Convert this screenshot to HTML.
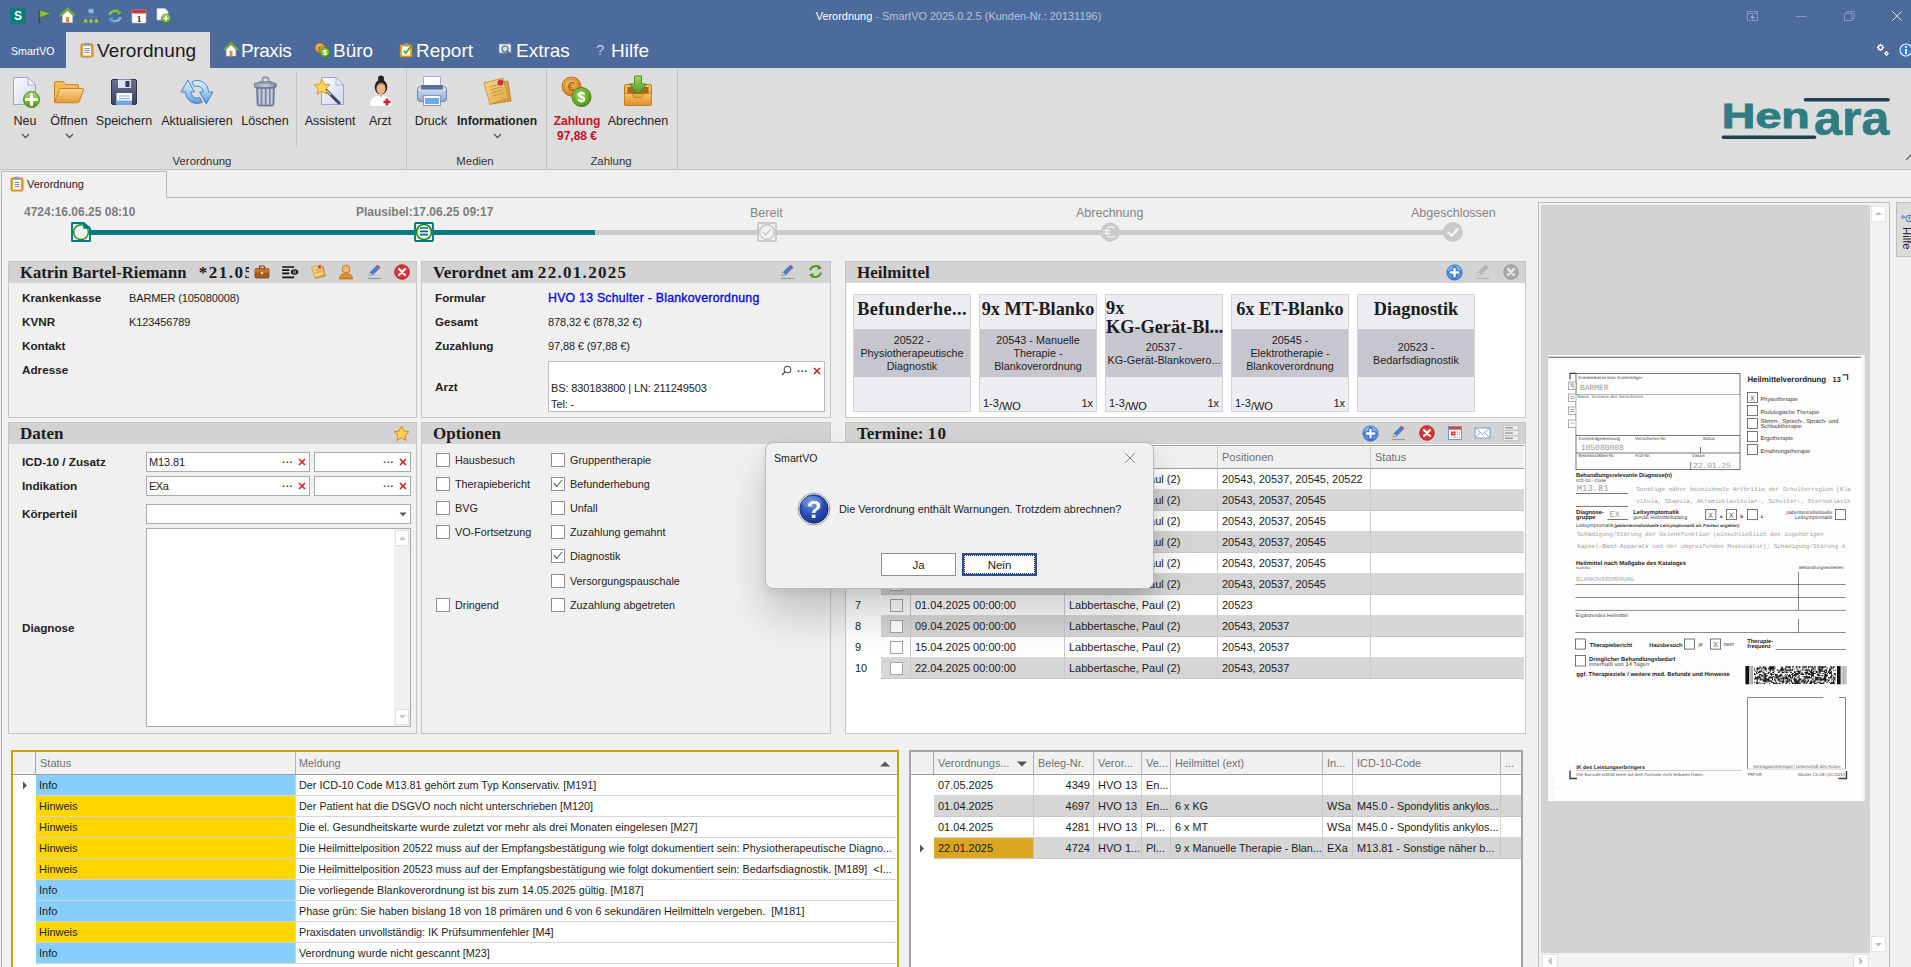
<!DOCTYPE html>
<html><head><meta charset="utf-8"><title>SmartVO</title>
<style>
*{box-sizing:border-box;margin:0;padding:0}
html,body{width:1911px;height:967px;overflow:hidden;background:#f0f0f0;font-family:"Liberation Sans",sans-serif;font-size:11.5px;color:#1a1a1a}
.a{position:absolute}
.t{position:absolute;white-space:nowrap;line-height:14px}
.pl{top:206px!important}
.b{font-weight:bold}
.serif{font-family:"Liberation Serif",serif;font-weight:bold}
#title{left:0;top:0;width:1911px;height:68px;background:#4d6a9c}
#ribbon{left:0;top:68px;width:1911px;height:102px;background:#dddddd;border-bottom:1px solid #bdbdbd}
.mtab{position:absolute;top:32.6px;height:36px;color:#fff;font-size:19px;line-height:36px;white-space:nowrap}
.rl{position:absolute;top:114px;font-size:12.5px;line-height:15px;text-align:center;white-space:nowrap;color:#222;transform:translateX(-50%)}
.gl{position:absolute;top:154px;font-size:11.4px;line-height:14px;color:#333;transform:translateX(-50%);white-space:nowrap}
.vsep{position:absolute;width:1px;background:#c4c4c4}
.chev{position:absolute;width:9px;height:6px}
.panel{position:absolute;border:1px solid #c6c6c6;background:#f0f0f0}
.ph{position:absolute;left:0;top:0;right:0;height:21px;background:#d3d3d3}
.panel.m{top:422px!important;height:312px!important}
.panel.m > :not(.ph):not(.pt){margin-top:1px}
.panel.m > .lbl,.panel.m > .val{margin-top:0!important}
.pt{position:absolute;left:11px;top:1px;font-family:"Liberation Serif",serif;font-weight:bold;font-size:17px;line-height:20px;color:#1c1c1c;white-space:nowrap}
.lbl{position:absolute;font-weight:bold;font-size:11.7px;line-height:14px;white-space:nowrap;color:#222}
.val{position:absolute;letter-spacing:-.12px;font-size:11px;line-height:14px;white-space:nowrap;color:#222}
.inp{position:absolute;background:#fff;border:1px solid #ababab;height:20px}
.cb{position:absolute;width:14px;height:14px;background:#fff;border:1px solid #8f8f8f}
.cbl{position:absolute;font-size:10.8px;line-height:14px;white-space:nowrap;color:#222}
</style></head><body>

<!-- ================= TITLE BAR ================= -->
<div class="a" id="title"></div>
<div class="t" style="left:0;width:1917px;top:9px;text-align:center;font-size:10.95px;color:#b4c3dd"><span style="color:#fff">Verordnung</span> - SmartVO 2025.0.2.5 (Kunden-Nr.: 20131196)</div>

<!-- menu tabs -->
<div class="a" style="left:66px;top:32px;width:144px;height:37px;background:#dddddd"></div>
<div class="t" style="left:11px;top:44px;color:#fff;font-size:10.6px">SmartVO</div>
<div class="mtab" style="left:97px;color:#1a1a1a;letter-spacing:.1px">Verordnung</div>
<div class="mtab" style="left:241px;letter-spacing:-.4px">Praxis</div>
<div class="mtab" style="left:333px">Büro</div>
<div class="mtab" style="left:416px">Report</div>
<div class="mtab" style="left:516px">Extras</div>
<div class="mtab" style="left:611px">Hilfe</div>

<!-- ================= RIBBON ================= -->
<div class="a" id="ribbon"></div>
<div class="rl" style="left:25px">Neu</div>
<div class="rl" style="left:69px">Öffnen</div>
<div class="rl" style="left:124px">Speichern</div>
<div class="rl" style="left:197px">Aktualisieren</div>
<div class="rl" style="left:265px">Löschen</div>
<div class="rl" style="left:330px">Assistent</div>
<div class="rl" style="left:380px">Arzt</div>
<div class="rl" style="left:431px">Druck</div>
<div class="rl b" style="left:497px;font-size:12px">Informationen</div>
<div class="rl b" style="left:577px;font-size:12px;color:#c8101e">Zahlung<br>97,88 €</div>
<div class="rl" style="left:638px">Abrechnen</div>
<div class="gl" style="left:202px">Verordnung</div>
<div class="gl" style="left:475px">Medien</div>
<div class="gl" style="left:611px">Zahlung</div>
<div class="vsep" style="left:296px;top:72px;height:76px"></div>
<div class="vsep" style="left:406px;top:69px;height:100px"></div>
<div class="vsep" style="left:546px;top:69px;height:100px"></div>
<div class="vsep" style="left:677px;top:69px;height:100px"></div>

<!-- document tab strip -->
<div class="a" style="left:166px;top:197px;width:1745px;height:1px;background:#b4b4b4"></div>
<div class="a" style="left:1px;top:171px;width:166px;height:27px;border:1px solid #b4b4b4;border-bottom:none;background:#f0f0f0"></div>
<div class="a" style="left:1px;top:197px;width:1px;height:770px;background:#a9a9a9"></div>
<div class="t" style="left:27px;top:177px;font-size:11px;color:#222">Verordnung</div>

<!-- ===== SVG defs ===== -->
<svg width="0" height="0" style="position:absolute">
<defs>
<linearGradient id="gPage" x1="0" y1="0" x2="1" y2="1"><stop offset="0" stop-color="#fdfdff"/><stop offset="1" stop-color="#cdd5ee"/></linearGradient>
<linearGradient id="gGreen" x1="0" y1="0" x2="0" y2="1"><stop offset="0" stop-color="#a6d85e"/><stop offset="1" stop-color="#4f9a1c"/></linearGradient>
<linearGradient id="gFold" x1="0" y1="0" x2="0" y2="1"><stop offset="0" stop-color="#fbd78f"/><stop offset="1" stop-color="#e59a35"/></linearGradient>
<linearGradient id="gFlop" x1="0" y1="0" x2="0" y2="1"><stop offset="0" stop-color="#6a7392"/><stop offset="1" stop-color="#3b4362"/></linearGradient>
<linearGradient id="gBlue" gradientUnits="userSpaceOnUse" x1="0" y1="3" x2="0" y2="27"><stop offset="0" stop-color="#dff3fb"/><stop offset=".5" stop-color="#a3d0f0"/><stop offset="1" stop-color="#4f98d8"/></linearGradient>
<linearGradient id="gTrash" x1="0" y1="0" x2="1" y2="0"><stop offset="0" stop-color="#8e96ab"/><stop offset=".5" stop-color="#c3c8d6"/><stop offset="1" stop-color="#7d859b"/></linearGradient>
<linearGradient id="gPrn" x1="0" y1="0" x2="0" y2="1"><stop offset="0" stop-color="#dfe7f5"/><stop offset="1" stop-color="#8ba3d0"/></linearGradient>
<linearGradient id="gNote" x1="0" y1="0" x2="1" y2="1"><stop offset="0" stop-color="#f8d68c"/><stop offset="1" stop-color="#e0a545"/></linearGradient>
<radialGradient id="gCoinO" cx=".4" cy=".35" r=".7"><stop offset="0" stop-color="#f7c574"/><stop offset="1" stop-color="#c97a1c"/></radialGradient>
<radialGradient id="gCoinG" cx=".4" cy=".35" r=".7"><stop offset="0" stop-color="#a5dc5a"/><stop offset="1" stop-color="#4a9418"/></radialGradient>
<radialGradient id="gQ" cx=".4" cy=".3" r=".8"><stop offset="0" stop-color="#5f86e6"/><stop offset=".6" stop-color="#2449b0"/><stop offset="1" stop-color="#16307e"/></radialGradient>
<linearGradient id="gPlus" x1="0" y1="0" x2="0" y2="1"><stop offset="0" stop-color="#8cc3f5"/><stop offset="1" stop-color="#3d82dc"/></linearGradient>
<linearGradient id="gBox" x1="0" y1="0" x2="0" y2="1"><stop offset="0" stop-color="#f6c266"/><stop offset="1" stop-color="#e08f2a"/></linearGradient>
</defs></svg>

<!-- quick access toolbar -->
<div class="a" style="left:10px;top:8px;width:16px;height:16px;background:#0d7f7b;color:#fff;font-weight:bold;font-size:12px;line-height:16px;text-align:center">S</div>
<svg class="a" style="left:36px;top:8px" width="16" height="16" viewBox="0 0 16 16"><rect x="2.5" y="2" width="1.6" height="13" fill="#444"/><path d="M4 2.5 L14 5.5 L4 9.5Z" fill="#8dc63f" stroke="#5a8f1f" stroke-width=".7"/></svg>
<svg class="a" style="left:59px;top:7px" width="17" height="17" viewBox="0 0 17 17"><path d="M1 9 L8.5 1.5 L16 9" fill="none" stroke="#6fae2d" stroke-width="2.2"/><path d="M3.5 8.5 L8.5 3.8 L13.5 8.5 V15.5 H3.5Z" fill="#fbfbfb" stroke="#c9c9c9" stroke-width=".6"/><rect x="7" y="10" width="3" height="5.5" fill="#e08d2c"/></svg>
<svg class="a" style="left:83px;top:8px" width="16" height="16" viewBox="0 0 16 16"><rect x="5.5" y="1" width="5" height="4" fill="#8ec0ee" stroke="#5b8fc8" stroke-width=".6"/><path d="M8 5 V9 M2.5 12 V9 H13.5 V12 M8 9 V12" stroke="#6d7d96" stroke-width="1" fill="none"/><rect x="1" y="11.5" width="3.2" height="3.2" fill="#9acb3c"/><rect x="6.4" y="11.5" width="3.2" height="3.2" fill="#9acb3c"/><rect x="11.8" y="11.5" width="3.2" height="3.2" fill="#9acb3c"/></svg>
<svg class="a" style="left:107px;top:8px" width="16" height="16" viewBox="0 0 16 16"><path d="M2.5 7 A5.5 5 0 0 1 12 4.5" fill="none" stroke="#8dc63f" stroke-width="2.4"/><path d="M10 1 L15 4.5 L10.5 7.5Z" fill="#7ab32e"/><path d="M13.5 9 A5.5 5 0 0 1 4 11.5" fill="none" stroke="#7db4e6" stroke-width="2.4"/><path d="M6 15 L1 11.5 L5.5 8.5Z" fill="#5b9bd8"/></svg>
<svg class="a" style="left:131px;top:8px" width="16" height="16" viewBox="0 0 16 16"><rect x="1" y="2" width="14" height="13" rx="1" fill="#fafafa" stroke="#c7c7c7" stroke-width=".6"/><rect x="1" y="2" width="14" height="3.6" rx="1" fill="#d9342b"/><text x="8" y="13.5" font-family="Liberation Serif" font-weight="bold" font-size="9" text-anchor="middle" fill="#222">1</text></svg>
<svg class="a" style="left:155px;top:7px" width="17" height="17" viewBox="0 0 17 17"><path d="M2 1.5 H10 L13 4.5 V13 H2Z" fill="#fbfbfd" stroke="#c2c7d6" stroke-width=".7"/><circle cx="11" cy="11.5" r="4.6" fill="url(#gGreen)" stroke="#3f8212" stroke-width=".6"/><path d="M11 8.8 V14.2 M8.3 11.5 H13.7" stroke="#fff" stroke-width="1.6"/></svg>

<!-- menu tab icons -->
<svg class="a" style="left:80px;top:42px" width="14" height="16" viewBox="0 0 14 16"><rect x="1" y="2" width="12" height="13" rx="1.2" fill="#e9a628" stroke="#b97a10" stroke-width=".8"/><rect x="3" y="4" width="8" height="9.5" fill="#fdfdfd"/><rect x="4.5" y=".8" width="5" height="2.8" rx=".8" fill="#7f9fd0"/><path d="M4.5 6.5 H9.5 M4.5 8.5 H9.5 M4.5 10.5 H9.5" stroke="#6b83b5" stroke-width=".9"/></svg>
<svg class="a" style="left:223px;top:41px" width="16" height="17" viewBox="0 0 17 17"><path d="M1 9 L8.5 1.5 L16 9" fill="none" stroke="#6fae2d" stroke-width="2.2"/><path d="M3.5 8.5 L8.5 3.8 L13.5 8.5 V15.5 H3.5Z" fill="#fbfbfb" stroke="#c9c9c9" stroke-width=".6"/><rect x="7" y="10" width="3" height="5.5" fill="#e08d2c"/></svg>
<svg class="a" style="left:314px;top:42px" width="17" height="16" viewBox="0 0 17 16"><circle cx="6" cy="6" r="5" fill="url(#gCoinO)" stroke="#a8650f" stroke-width=".6"/><text x="6" y="8.6" font-size="7" font-weight="bold" text-anchor="middle" fill="#a8650f" font-family="Liberation Sans">€</text><circle cx="11" cy="10.5" r="5" fill="url(#gCoinG)" stroke="#3b7a10" stroke-width=".6"/><text x="11" y="13.3" font-size="7.5" font-weight="bold" text-anchor="middle" fill="#fff" font-family="Liberation Sans">$</text></svg>
<svg class="a" style="left:399px;top:42px" width="15" height="16" viewBox="0 0 15 16"><rect x="1" y="2.5" width="12" height="12.5" rx="1" fill="#eaa92c" stroke="#b97a10" stroke-width=".8"/><rect x="3" y="4.5" width="8" height="9" fill="#fdfdf4"/><rect x="4.5" y="1" width="5" height="2.8" rx=".8" fill="#8a8f9c"/><path d="M4.5 8.5 L6.8 11 L12.5 3.5" fill="none" stroke="#5da51e" stroke-width="1.8"/></svg>
<svg class="a" style="left:498px;top:42px" width="16" height="16" viewBox="0 0 16 16"><rect x="1" y="2" width="12" height="9" fill="#e9eef8" stroke="#7f8fb2" stroke-width=".8"/><path d="M2 2 V.8 M5 2 V.8 M8 2 V.8 M11 2 V.8" stroke="#6b7a9c" stroke-width="1"/><circle cx="7" cy="7" r="3" fill="#cfe2f7" stroke="#55627e" stroke-width="1.1"/><path d="M9.3 9.3 L14 14.5" stroke="#55627e" stroke-width="2"/></svg>
<div class="t" style="left:596px;top:41px;font-size:15px;line-height:18px;color:#b5cbf2">?</div>

<!-- right title icons -->
<svg class="a" style="left:1747px;top:11px" width="11" height="10" viewBox="0 0 11 10"><rect x=".5" y=".5" width="10" height="9" fill="none" stroke="#8197bf" stroke-width="1"/><path d="M.5 2.500 H10.500" fill="none" stroke="#8197bf" stroke-width="1"/><path d="M5.500 9 V5 M3.500 6.500 L5.500 4.300 L7.500 6.500Z" fill="#8ea2c6" stroke="#8ea2c6" stroke-width=".9"/></svg>
<div class="a" style="left:1796px;top:16px;width:10px;height:1px;background:#8499bd"></div>
<svg class="a" style="left:1844px;top:11px" width="11" height="10" viewBox="0 0 11 10"><rect x=".5" y="2.500" width="7.500" height="7" fill="none" stroke="#8197bf"/><path d="M2.500 2.500 V.5 H10.300 V7.500 H8" fill="none" stroke="#8197bf"/></svg>
<svg class="a" style="left:1892px;top:11px" width="10" height="10" viewBox="0 0 10 10"><path d="M.3 .3 L9.700 9.700 M9.700 .3 L.3 9.700" stroke="#d3dbea" stroke-width="1"/></svg>
<svg class="a" style="left:1876px;top:43px" width="14" height="14" viewBox="0 0 14 14"><circle cx="4.5" cy="4.5" r="2.2" fill="none" stroke="#fff" stroke-width="1.5"/><path d="M4.5 .8 V2 M4.5 7 V8.2 M.8 4.5 H2 M7 4.5 H8.2 M1.9 1.9 L2.7 2.7 M6.3 6.3 L7.1 7.1 M7.1 1.9 L6.3 2.7 M1.9 7.1 L2.7 6.3" stroke="#fff" stroke-width="1"/><circle cx="10.5" cy="10.5" r="1.3" fill="none" stroke="#fff" stroke-width="1.2"/><path d="M10.5 8 V9 M10.5 12 V13 M8 10.5 H9 M12 10.5 H13" stroke="#fff" stroke-width=".9"/></svg>
<svg class="a" style="left:1899px;top:43px" width="12" height="14" viewBox="0 0 12 14"><circle cx="7" cy="7" r="6" fill="#3a78d8" stroke="#e9eef8" stroke-width="1.2"/><rect x="6" y="6" width="2" height="5" fill="#fff"/><circle cx="7" cy="4" r="1.1" fill="#fff"/></svg>

<!-- ribbon big icons -->
<svg class="a" style="left:9px;top:74px" width="34" height="36" viewBox="0 0 34 36"><path d="M4.5 3.5 H19 L26.5 11 V30.5 H4.5Z" fill="url(#gPage)" stroke="#9aa5cf" stroke-width="1"/><path d="M19 3.5 V11 H26.5Z" fill="#eef1fb" stroke="#9aa5cf" stroke-width=".8"/><circle cx="22.5" cy="25.5" r="8" fill="url(#gGreen)" stroke="#4a8f1a" stroke-width="1"/><path d="M22.500 20.500 V30.500 M17.500 25.500 H27.500" stroke="#fff" stroke-width="3.200" stroke-linecap="round"/></svg>
<svg class="a" style="left:52px;top:78px" width="34" height="28" viewBox="0 0 34 28"><path d="M2.500 24.500 V5 Q2.500 3.500 4 3.500 H11 L13.500 6.500 H25 Q26.500 6.500 26.500 8 V11" fill="#f3b95a" stroke="#c9822a" stroke-width="1"/><path d="M2.500 24.500 L7.500 11.500 Q8 10.500 9 10.500 H30.500 Q32 10.500 31.500 12 L27 24 Q26.700 24.800 25.500 24.800 H3Z" fill="url(#gFold)" stroke="#c9822a" stroke-width="1"/></svg>
<svg class="a" style="left:110px;top:78px" width="28" height="28" viewBox="0 0 28 28"><rect x="1.500" y="1.500" width="25" height="25" rx="1.500" fill="url(#gFlop)" stroke="#2e3450" stroke-width="1"/><rect x="8" y="1.500" width="13" height="8.500" fill="#dfe3ee"/><rect x="15.500" y="3" width="4" height="6" fill="#353b57"/><rect x="6.500" y="15" width="15.500" height="11.500" fill="#fbfcff"/><rect x="6.500" y="22.500" width="15.500" height="4" fill="#6fa7e2"/><path d="M9 18 H19.500 M9 20.500 H19.500" stroke="#8fa7d0" stroke-width="1"/></svg>
<svg class="a" style="left:180px;top:77px" width="34" height="30" viewBox="0 0 34 30"><path d="M22.22 25.25 A11.5 11.5 0 0 1 5.50 15.00 L1.00 15.00 L7.80 3.20 L14.40 15.00 L11.00 15.00 A6.0 6.0 0 0 0 19.72 20.35 Z" fill="url(#gBlue)" stroke="#4079be" stroke-width=".9" stroke-linejoin="round"/><path d="M11.78 4.75 A11.5 11.5 0 0 1 28.50 15.00 L33.00 15.00 L26.20 26.80 L19.60 15.00 L23.00 15.00 A6.0 6.0 0 0 0 14.28 9.65 Z" fill="url(#gBlue)" stroke="#4079be" stroke-width=".9" stroke-linejoin="round"/></svg>
<svg class="a" style="left:252px;top:75px" width="26" height="32" viewBox="0 0 26 32"><path d="M9.500 8 L10.800 2.800 Q11 2 12 2 H15.200 Q16.200 2 16.400 2.800 L17.700 8" fill="#aeb4c6" stroke="#737b95" stroke-width="1"/><rect x="11.500" y="3.800" width="4.200" height="2.200" rx=".6" fill="#dcdcdc"/><path d="M5 8.500 L7.500 6.500 H19.500 L22 8.500Z" fill="#9aa1b8" stroke="#737b95" stroke-width=".6"/><rect x="2.300" y="8" width="22" height="4.700" rx="1.200" fill="url(#gTrash)" stroke="#6b7390" stroke-width=".8"/><path d="M4.500 12.700 H22.500 L21.800 29.500 Q21.700 31 20.200 31 H6.800 Q5.300 31 5.200 29.500Z" fill="#7d85a2" stroke="#666e8b" stroke-width=".8"/><path d="M6.400 14 H8.600 V29.500 H6.800Z M10.400 14 H12.800 V29.500 H10.400Z M14.600 14 H17 V29.500 H14.600Z M18.600 14 H20.800 L20.400 29.500 H18.600Z" fill="#c3cfdc"/></svg>
<svg class="a" style="left:312px;top:74px" width="34" height="34" viewBox="0 0 34 34"><path d="M9.500 3.500 H24 L31.500 11 V30.500 H9.500Z" fill="url(#gPage)" stroke="#9aa5cf" stroke-width="1"/><path d="M24 3.500 V11 H31.500Z" fill="#eef1fb" stroke="#9aa5cf" stroke-width=".8"/><path d="M14 16 L27 29" stroke="#3d4258" stroke-width="3" stroke-linecap="round"/><path d="M14.500 16.500 L19 21" stroke="#c9ccd8" stroke-width="1.200"/><path d="M10 5 L12.300 10.200 L18 10.800 L13.800 14.600 L15 20.200 L10 17.300 L5 20.200 L6.200 14.600 L2 10.800 L7.700 10.200Z" fill="#fbd25c" stroke="#e59a1e" stroke-width="1"/></svg>
<svg class="a" style="left:366px;top:74px" width="30" height="34" viewBox="0 0 30 34"><path d="M3 32.500 Q3 21 15 21 Q27 21 27 32.500Z" fill="#fdfdfd" stroke="#d5d5d5" stroke-width=".8"/><circle cx="15" cy="4.500" r="3" fill="#26221f"/><ellipse cx="15" cy="13" rx="6.300" ry="7.500" fill="#26221f"/><ellipse cx="15" cy="14.500" rx="4.500" ry="5.800" fill="#e9b98a"/><path d="M10.500 12 Q15 8 19.500 12 Q17 9.500 15 9.500 Q12 9.500 10.500 12Z" fill="#26221f"/><path d="M12.500 20 L15 24 L17.500 20Z" fill="#e9b98a"/><path d="M21 24.500 V31.500 M17.500 28 H24.500" stroke="#d81e1e" stroke-width="2.600"/></svg>
<svg class="a" style="left:415px;top:74px" width="34" height="34" viewBox="0 0 34 34"><path d="M8.500 2.500 H25.500 V14 H8.500Z" fill="#fbfcff" stroke="#a4b0cd" stroke-width="1"/><rect x="2.500" y="12.500" width="29" height="15" rx="3" fill="url(#gPrn)" stroke="#6d84b8" stroke-width="1"/><rect x="6" y="11" width="22" height="4.500" rx="1" fill="#5b6e99"/><rect x="8.500" y="21.500" width="17" height="10" fill="#fbfcff" stroke="#8697c0" stroke-width="1"/><rect x="10" y="24" width="14" height="6" fill="#72aae6"/></svg>
<svg class="a" style="left:481px;top:75px" width="32" height="33" viewBox="0 0 32 33"><path d="M7 9 L27 6 L30 26 L10 29Z" fill="#dca044" stroke="#b87a24" stroke-width=".8"/><path d="M3 8 L22 3 L28 23 L9 29.500Z" fill="url(#gNote)" stroke="#c28a30" stroke-width=".8"/><path d="M8.500 12 L20 8.800 M9.500 15 L21 11.800 M10.500 18 L22 14.800 M11.500 21 L23 17.800" stroke="#c59236" stroke-width="1"/><circle cx="19.500" cy="7.500" r="2.600" fill="#d62f3a" stroke="#9a1a24" stroke-width=".6"/></svg>
<svg class="a" style="left:560px;top:75px" width="34" height="34" viewBox="0 0 34 34"><circle cx="11.500" cy="11.500" r="9.500" fill="url(#gCoinO)" stroke="#b46d14" stroke-width="1"/><circle cx="11.500" cy="11.500" r="7" fill="none" stroke="#c8831f" stroke-width=".8"/><text x="11.200" y="16" font-size="13" font-weight="bold" text-anchor="middle" fill="#b06a12" font-family="Liberation Sans">€</text><circle cx="21.500" cy="22" r="9.500" fill="url(#gCoinG)" stroke="#3f8212" stroke-width="1"/><circle cx="21.500" cy="22" r="7" fill="none" stroke="#5da01f" stroke-width=".8"/><text x="21.500" y="27" font-size="14" font-weight="bold" text-anchor="middle" fill="#fff" font-family="Liberation Sans">$</text></svg>
<svg class="a" style="left:622px;top:74px" width="32" height="34" viewBox="0 0 32 34"><path d="M2.500 12 Q2.500 10.500 4 10.500 H28 Q29.500 10.500 29.500 12 V30 Q29.500 31.500 28 31.500 H4 Q2.500 31.500 2.500 30Z" fill="url(#gBox)" stroke="#c17a1c" stroke-width="1"/><rect x="5.500" y="13" width="21" height="7" fill="#a5681c"/><path d="M2.500 19.500 H10 L12 23.500 H20 L22 19.500 H29.500 V30 Q29.500 31.500 28 31.500 H4 Q2.500 31.500 2.500 30Z" fill="url(#gBox)" stroke="#c17a1c" stroke-width=".8"/><path d="M12.500 2 H19.500 V10 H24.500 L16 20 L7.500 10 H12.500Z" fill="url(#gGreen)" stroke="#4a8f1a" stroke-width="1"/></svg>

<!-- dropdown chevrons -->
<svg class="chev" style="left:21px;top:133px" viewBox="0 0 9 6"><path d="M1 1 L4.500 4.500 L8 1" fill="none" stroke="#555" stroke-width="1.300"/></svg>
<svg class="chev" style="left:65px;top:133px" viewBox="0 0 9 6"><path d="M1 1 L4.500 4.500 L8 1" fill="none" stroke="#555" stroke-width="1.300"/></svg>
<svg class="chev" style="left:493px;top:133px" viewBox="0 0 9 6"><path d="M1 1 L4.500 4.500 L8 1" fill="none" stroke="#555" stroke-width="1.300"/></svg>

<!-- doc tab icon -->
<svg class="a" style="left:10px;top:176px" width="14" height="16" viewBox="0 0 14 16"><rect x="1" y="2" width="12" height="13" rx="1.200" fill="#e9a628" stroke="#b97a10" stroke-width=".8"/><rect x="3" y="4" width="8" height="9.500" fill="#fdfdfd"/><rect x="4.500" y=".8" width="5" height="2.800" rx=".8" fill="#7f9fd0"/><path d="M4.500 6.500 H9.500 M4.500 8.500 H9.500 M4.500 10.500 H9.500" stroke="#6b83b5" stroke-width=".9"/></svg>

<!-- Henara logo -->
<svg class="a" style="left:1718px;top:94px" width="176" height="48" viewBox="0 0 176 48">
<text x="3.800" y="34.300" font-family="Liberation Sans" font-weight="bold" font-size="35.500" fill="#2f7c82" stroke="#2f7c82" stroke-width=".9" textLength="88" lengthAdjust="spacingAndGlyphs">Hen</text>
<text x="96" y="41" font-family="Liberation Sans" font-weight="bold" font-size="48" fill="#2f7c82" stroke="#2f7c82" stroke-width=".6" textLength="75.500" lengthAdjust="spacingAndGlyphs">ara</text>
<path d="M87.500 5.700 H170" stroke="#1f3f52" stroke-width="3.600" stroke-linecap="round"/>
<path d="M5.500 43.200 H96.500" stroke="#1f3f52" stroke-width="3.600" stroke-linecap="round"/>
</svg>
<svg class="a" style="left:1906px;top:153px" width="6" height="8" viewBox="0 0 6 8"><path d="M0 7 L6 1" fill="none" stroke="#555" stroke-width="1.200"/></svg>

<!-- ================= PROGRESS ================= -->
<div class="a" style="left:81px;top:230px;width:1372px;height:5px;background:#c9c9c9"></div>
<div class="a" style="left:81px;top:230px;width:514px;height:5px;background:#007b83"></div>
<div class="t b" style="left:24px;top:205px;font-size:12px;color:#7d7d7d">4724:16.06.25 08:10</div>
<div class="t b" style="left:356px;top:205px;font-size:12px;color:#7d7d7d">Plausibel:17.06.25 09:17</div>
<div class="t" style="left:750px;top:206px;font-size:12.5px;color:#858585">Bereit</div>
<div class="t" style="left:1076px;top:206px;font-size:12.5px;color:#858585">Abrechnung</div>
<div class="t" style="left:1411px;top:206px;font-size:12.5px;color:#858585">Abgeschlossen</div>
<svg class="a" style="left:71px;top:222px" width="20" height="20" viewBox="0 0 20 20"><path d="M1 1 H12.700 L19 6.300 V19 H1Z" fill="#f1f1f1" stroke="#007b83" stroke-width="1.900" stroke-linejoin="round"/><path d="M12.300 1 V6.800 H19Z" fill="#007b83"/><circle cx="10" cy="10.200" r="7.400" fill="#f1f1f1" stroke="#1a9118" stroke-width="1.500"/><path d="M12.300 1.500 V6.800 H18.500" fill="#007b83" stroke="none"/></svg>
<svg class="a" style="left:414px;top:222px" width="20" height="20" viewBox="0 0 20 20"><rect x="1" y="1" width="18" height="18" rx="1" fill="#f3f3f3" stroke="#007b83" stroke-width="1.900"/><circle cx="10" cy="10" r="7.500" fill="#f6f4f6" stroke="#1a9118" stroke-width="1.700"/><path d="M6 6 H14 M6 9.300 H14 M6 12.600 H14" stroke="#007580" stroke-width="1.700"/></svg>
<svg class="a" style="left:757px;top:222px" width="20" height="20" viewBox="0 0 20 20"><rect x="1" y="1" width="18" height="18" rx=".8" fill="#f0f0f0" stroke="#c9c9c9" stroke-width="1.900"/><circle cx="10" cy="10" r="7.400" fill="#f0f0f0" stroke="#c9c9c9" stroke-width="1.600"/><path d="M5.800 10 L8.800 12.600 L14 7.400" fill="none" stroke="#c9c9c9" stroke-width="1.500"/></svg>
<svg class="a" style="left:1100px;top:222px" width="20" height="20" viewBox="0 0 20 20"><circle cx="10.200" cy="10" r="9.600" fill="#c9c9c9"/><path d="M15 6.300 A5.300 5.300 0 1 0 15 13.800" fill="none" stroke="#f0f0f0" stroke-width="1.300"/><path d="M3 8.600 H10.800 M3 11.300 H10.800" stroke="#f0f0f0" stroke-width="1.300"/></svg>
<svg class="a" style="left:1443px;top:222px" width="20" height="20" viewBox="0 0 20 20"><circle cx="10" cy="10" r="10" fill="#c9c9c9"/><path d="M5 10.300 L8.600 13.700 L15.300 6.500" fill="none" stroke="#f4f4f4" stroke-width="2.400"/></svg>

<!-- ================= PATIENT PANEL ================= -->
<div class="panel" style="left:8px;top:261px;width:409px;height:157px">
 <div class="ph"></div>
 <div class="pt" style="width:229px;overflow:hidden;font-size:16.6px">Katrin Bartel-Riemann &nbsp;&nbsp;<span style="letter-spacing:1.5px;font-size:17px">*21.05.1975</span></div>
 <div class="lbl" style="left:13px;top:29px">Krankenkasse</div><div class="val" style="left:120px;top:29px">BARMER (105080008)</div>
 <div class="lbl" style="left:13px;top:53px">KVNR</div><div class="val" style="left:120px;top:53px">K123456789</div>
 <div class="lbl" style="left:13px;top:77px">Kontakt</div>
 <div class="lbl" style="left:13px;top:101px">Adresse</div>
</div>
<!-- patient header icons -->
<svg class="a" style="left:254px;top:264px" width="16" height="16" viewBox="0 0 16 16"><rect x="5.500" y="2" width="5" height="3" rx="1" fill="none" stroke="#6e3a12" stroke-width="1.200"/><rect x="1" y="4.500" width="14" height="9.500" rx="1.200" fill="#a9581d" stroke="#6e3a12" stroke-width=".8"/><rect x="1" y="4.500" width="14" height="4" fill="#c4702b"/><rect x="6.800" y="8" width="2.400" height="2" fill="#f1d9a0"/></svg>
<svg class="a" style="left:282px;top:264px" width="17" height="16" viewBox="0 0 17 16"><path d="M.2 3 H12.200 M.2 6.200 H7.300 M.2 9.400 H7.300 M.2 13.300 H12.200" stroke="#111" stroke-width="1.700"/><ellipse cx="12.600" cy="8" rx="3.700" ry="2.700" fill="#111"/><circle cx="12.600" cy="8" r="1.300" fill="none" stroke="#e8e8e8" stroke-width=".7"/></svg>
<svg class="a" style="left:310px;top:263px" width="17" height="17" viewBox="0 0 17 17"><path d="M3 5 L13 3 L15.500 13 L5.500 15.500Z" fill="#dca044" stroke="#b87a24" stroke-width=".6"/><path d="M1.500 4.500 L11 1.500 L14.500 11.500 L5 15Z" fill="#f5cd7c" stroke="#c28a30" stroke-width=".6"/><path d="M5 7.500 L11 5.600 M5.800 9.800 L11.800 7.900" stroke="#c59236" stroke-width=".8"/><circle cx="9.500" cy="4" r="1.500" fill="#d62f3a"/></svg>
<svg class="a" style="left:338px;top:263px" width="16" height="17" viewBox="0 0 16 17"><path d="M1.500 16 Q1.500 10.500 8 10.500 Q14.500 10.500 14.500 16Z" fill="#e8912c" stroke="#b66a14" stroke-width=".7"/><circle cx="8" cy="6" r="4" fill="#f3b565" stroke="#b66a14" stroke-width=".7"/><rect x="1.500" y="14.500" width="13" height="1.500" fill="#c97a1c"/></svg>
<svg class="a" style="left:366px;top:263px" width="17" height="17" viewBox="0 0 17 17"><path d="M2 15.500 H15" stroke="#9a9a9a" stroke-width="1.200"/><path d="M3 12.500 L4 9.500 L11.500 2 L14 4.500 L6.500 12Z" fill="#4a7fd6" stroke="#2c57a8" stroke-width=".6"/><path d="M11.500 2 L14 4.500 L12.800 5.700 L10.300 3.200Z" fill="#e04848"/><path d="M3 12.500 L4 9.500 L6.500 12Z" fill="#f3d9a8"/></svg>
<svg class="a" style="left:394px;top:264px" width="16" height="16" viewBox="0 0 16 16"><circle cx="8" cy="8" r="7.300" fill="#e23030" stroke="#a61616" stroke-width=".8"/><path d="M5 5 L11 11 M11 5 L5 11" stroke="#fff" stroke-width="2.300" stroke-linecap="round"/></svg>

<!-- ================= VERORDNET PANEL ================= -->
<div class="panel" style="left:421px;top:261px;width:410px;height:157px">
 <div class="ph"></div>
 <div class="pt">Verordnet am <span style="letter-spacing:1.3px">22.01.2025</span></div>
 <div class="lbl" style="left:13px;top:29px">Formular</div><div class="val" style="left:126px;top:29px;color:#0808e8;font-size:12.3px;letter-spacing:.25px;-webkit-text-stroke:.35px #0808e8">HVO 13 Schulter - Blankoverordnung</div>
 <div class="lbl" style="left:13px;top:53px">Gesamt</div><div class="val" style="left:126px;top:53px">878,32 € (878,32 €)</div>
 <div class="lbl" style="left:13px;top:77px">Zuzahlung</div><div class="val" style="left:126px;top:77px">97,88 € (97,88 €)</div>
 <div class="lbl" style="left:13px;top:118px">Arzt</div>
 <div class="a" style="left:126px;top:99px;width:277px;height:51px;background:#fff;border:1px solid #bcbcbc"></div>
 <div class="val" style="left:129px;top:119px">BS: 830183800 | LN: 211249503</div>
 <div class="val" style="left:129px;top:135px">Tel: -</div>
</div>
<svg class="a" style="left:781px;top:365px" width="11" height="11" viewBox="0 0 11 11"><circle cx="6.500" cy="4.500" r="3.300" fill="none" stroke="#555" stroke-width="1.100"/><path d="M4 7 L1 10" stroke="#555" stroke-width="1.400"/></svg>
<div class="t b" style="left:797px;top:364px;font-size:11px;color:#444;letter-spacing:0">···</div>
<svg class="a" style="left:813px;top:367px" width="8" height="8" viewBox="0 0 8 8"><path d="M1 1 L7 7 M7 1 L1 7" stroke="#d11f1f" stroke-width="1.600"/></svg>
<svg class="a" style="left:779px;top:263px" width="17" height="17" viewBox="0 0 17 17"><path d="M2 15.500 H15" stroke="#9a9a9a" stroke-width="1.200"/><path d="M3 12.500 L4 9.500 L11.500 2 L14 4.500 L6.500 12Z" fill="#4a7fd6" stroke="#2c57a8" stroke-width=".6"/><path d="M11.500 2 L14 4.500 L12.800 5.700 L10.300 3.200Z" fill="#e04848"/><path d="M3 12.500 L4 9.500 L6.500 12Z" fill="#f3d9a8"/></svg>
<svg class="a" style="left:807px;top:263px" width="17" height="17" viewBox="0 0 16 16"><path d="M3 7 A5.200 5 0 0 1 12 4.500" fill="none" stroke="#4f9a1c" stroke-width="2"/><path d="M10.500 1.500 L14 5 L9.800 6.500Z" fill="#4f9a1c"/><path d="M13 9 A5.200 5 0 0 1 4 11.500" fill="none" stroke="#4f9a1c" stroke-width="2"/><path d="M5.500 14.500 L2 11 L6.200 9.500Z" fill="#4f9a1c"/></svg>

<!-- ================= HEILMITTEL PANEL ================= -->
<div class="panel" style="left:845px;top:261px;width:681px;height:157px;background:#fff">
 <div class="ph"></div>
 <div class="pt" style="left:11px">Heilmittel</div>
</div>
<style>
.hc{position:absolute;top:294px;width:118px;height:118px;background:#ececf1;border:1px solid #d4d4da}
.hc .mid{position:absolute;left:0;right:0;top:34px;height:48px;background:#c6c6ce}
.hc .ht{position:absolute;left:0;right:0;top:4px;text-align:center;font-family:"Liberation Serif",serif;font-weight:bold;font-size:18.3px;line-height:20px;color:#1c1c1c;white-space:nowrap}
.hc .hs{position:absolute;left:0;right:0;text-align:center;font-size:10.8px;line-height:13px;color:#222;white-space:nowrap}
.hc .f1{position:absolute;left:3px;top:101px;font-size:11px;line-height:14px;white-space:nowrap}
.hc .f2{position:absolute;right:3px;top:101px;font-size:11px;line-height:14px}
</style>
<div class="hc" style="left:853px"><div class="mid"></div><div class="ht" style="letter-spacing:.35px">Befunderhe...</div><div class="hs" style="top:39px">20522 -<br>Physiotherapeutische<br>Diagnostik</div></div>
<div class="hc" style="left:979px"><div class="mid"></div><div class="ht">9x MT-Blanko</div><div class="hs" style="top:39px">20543 - Manuelle<br>Therapie -<br>Blankoverordnung</div><div class="f1">1-3<span style="position:relative;top:3px">/WO</span></div><div class="f2">1x</div></div>
<div class="hc" style="left:1105px"><div class="mid"></div><div class="ht" style="text-align:left;left:0;line-height:19px">9x<br>KG-Gerät-Bl...</div><div class="hs" style="top:46px">20537 -<br>KG-Gerät-Blankovero...</div><div class="f1">1-3<span style="position:relative;top:3px">/WO</span></div><div class="f2">1x</div></div>
<div class="hc" style="left:1231px"><div class="mid"></div><div class="ht">6x ET-Blanko</div><div class="hs" style="top:39px">20545 -<br>Elektrotherapie -<br>Blankoverordnung</div><div class="f1">1-3<span style="position:relative;top:3px">/WO</span></div><div class="f2">1x</div></div>
<div class="hc" style="left:1357px"><div class="mid"></div><div class="ht">Diagnostik</div><div class="hs" style="top:46px">20523 -<br>Bedarfsdiagnostik</div></div>
<svg class="a" style="left:1446px;top:264px" width="17" height="17" viewBox="0 0 17 17"><circle cx="8.500" cy="8.500" r="7.600" fill="url(#gPlus)" stroke="#2f63bd" stroke-width=".9"/><path d="M8.500 4.200 V12.800 M4.200 8.500 H12.800" stroke="#2a5fc0" stroke-width="4.200" stroke-linecap="round"/><path d="M8.500 4.600 V12.400 M4.600 8.500 H12.400" stroke="#fff" stroke-width="2.400" stroke-linecap="round"/></svg>
<svg class="a" style="left:1474px;top:263px" width="17" height="17" viewBox="0 0 17 17"><path d="M2 15.500 H15" stroke="#b4b4b4" stroke-width="1.200"/><path d="M3 12.500 L4 9.500 L11.500 2 L14 4.500 L6.500 12Z" fill="#b9b9b9" stroke="#9c9c9c" stroke-width=".6"/><path d="M3 12.500 L4 9.500 L6.500 12Z" fill="#e2e2e2"/></svg>
<svg class="a" style="left:1503px;top:264px" width="16" height="16" viewBox="0 0 16 16"><circle cx="8" cy="8" r="7.300" fill="#a9a9a9" stroke="#8e8e8e" stroke-width=".8"/><path d="M5 5 L11 11 M11 5 L5 11" stroke="#e9e9e9" stroke-width="2.300" stroke-linecap="round"/></svg>

<!-- ================= DATEN PANEL ================= -->
<div class="panel m" style="left:8px;top:423px;width:409px;height:311px">
 <div class="ph"></div>
 <div class="pt">Daten</div>
 <div class="lbl" style="left:13px;top:32px">ICD-10 / Zusatz</div>
 <div class="lbl" style="left:13px;top:56px">Indikation</div>
 <div class="lbl" style="left:13px;top:84px">Körperteil</div>
 <div class="lbl" style="left:13px;top:198px">Diagnose</div>
 <div class="inp" style="left:137px;top:28px;width:164px"></div><div class="val" style="left:140px;top:32px;font-size:11px">M13.81</div>
 <div class="inp" style="left:305px;top:28px;width:97px"></div>
 <div class="inp" style="left:137px;top:52px;width:164px"></div><div class="val" style="left:140px;top:56px;font-size:11px;letter-spacing:-.5px">EXa</div>
 <div class="inp" style="left:305px;top:52px;width:97px"></div>
 <div class="inp" style="left:137px;top:80px;width:265px"></div>
 <div class="inp" style="left:137px;top:104px;width:265px;height:199px"></div>
 <div class="a" style="left:385px;top:105px;width:16px;height:197px;background:#f0f0f0"></div>
 <div class="a" style="left:386px;top:106px;width:14px;height:16px;background:#fdfdfd;border:1px solid #e1e1e1"></div>
 <div class="a" style="left:386px;top:285px;width:14px;height:16px;background:#fdfdfd;border:1px solid #e1e1e1"></div>
</div>
<svg class="a" style="left:398px;top:535px" width="9" height="6" viewBox="0 0 9 6"><path d="M1 5 L4.500 1.200 L8 5Z" fill="#c7c7c7"/></svg>
<svg class="a" style="left:398px;top:714px" width="9" height="6" viewBox="0 0 9 6"><path d="M1 1 L4.500 4.800 L8 1Z" fill="#c7c7c7"/></svg>
<svg class="a" style="left:399px;top:512px" width="8" height="5" viewBox="0 0 8 5"><path d="M.5 .5 L4 4.300 L7.500 .5Z" fill="#555"/></svg>
<svg class="a" style="left:393px;top:425px" width="17" height="17" viewBox="0 0 17 17"><path d="M8.500 1 L10.800 6 L16 6.600 L12.100 10.200 L13.200 15.500 L8.500 12.800 L3.800 15.500 L4.900 10.200 L1 6.600 L6.200 6Z" fill="#f9cf55" stroke="#d58a1a" stroke-width="1"/></svg>
<!-- input glyphs -->
<div class="t b" style="left:282px;top:455px;font-size:11px;color:#555">···</div>
<svg class="a" style="left:298px;top:458px" width="8" height="8" viewBox="0 0 8 8"><path d="M1 1 L7 7 M7 1 L1 7" stroke="#d11f1f" stroke-width="1.600"/></svg>
<div class="t b" style="left:383px;top:455px;font-size:11px;color:#555">···</div>
<svg class="a" style="left:399px;top:458px" width="8" height="8" viewBox="0 0 8 8"><path d="M1 1 L7 7 M7 1 L1 7" stroke="#d11f1f" stroke-width="1.600"/></svg>
<div class="t b" style="left:282px;top:479px;font-size:11px;color:#555">···</div>
<svg class="a" style="left:298px;top:482px" width="8" height="8" viewBox="0 0 8 8"><path d="M1 1 L7 7 M7 1 L1 7" stroke="#d11f1f" stroke-width="1.600"/></svg>
<div class="t b" style="left:383px;top:479px;font-size:11px;color:#555">···</div>
<svg class="a" style="left:399px;top:482px" width="8" height="8" viewBox="0 0 8 8"><path d="M1 1 L7 7 M7 1 L1 7" stroke="#d11f1f" stroke-width="1.600"/></svg>

<!-- ================= OPTIONEN PANEL ================= -->
<div class="panel m" style="left:421px;top:423px;width:410px;height:311px">
 <div class="ph"></div>
 <div class="pt">Optionen</div>
 <div class="cb" style="left:14px;top:29px"></div><div class="cbl" style="left:33px;top:29px">Hausbesuch</div>
 <div class="cb" style="left:14px;top:53px"></div><div class="cbl" style="left:33px;top:53px">Therapiebericht</div>
 <div class="cb" style="left:14px;top:77px"></div><div class="cbl" style="left:33px;top:77px">BVG</div>
 <div class="cb" style="left:14px;top:101px"></div><div class="cbl" style="left:33px;top:101px">VO-Fortsetzung</div>
 <div class="cb" style="left:14px;top:174px"></div><div class="cbl" style="left:33px;top:174px">Dringend</div>
 <div class="cb" style="left:129px;top:29px"></div><div class="cbl" style="left:148px;top:29px">Gruppentherapie</div>
 <div class="cb" style="left:129px;top:53px"></div><div class="cbl" style="left:148px;top:53px">Befunderhebung</div>
 <div class="cb" style="left:129px;top:77px"></div><div class="cbl" style="left:148px;top:77px">Unfall</div>
 <div class="cb" style="left:129px;top:101px"></div><div class="cbl" style="left:148px;top:101px">Zuzahlung gemahnt</div>
 <div class="cb" style="left:129px;top:125px"></div><div class="cbl" style="left:148px;top:125px">Diagnostik</div>
 <div class="cb" style="left:129px;top:150px"></div><div class="cbl" style="left:148px;top:150px">Versorgungspauschale</div>
 <div class="cb" style="left:129px;top:174px"></div><div class="cbl" style="left:148px;top:174px">Zuzahlung abgetreten</div>
</div>
<svg class="a" style="left:553px;top:479px" width="10" height="9" viewBox="0 0 10 9"><path d="M1 4.500 L3.800 7.500 L9 1" fill="none" stroke="#5e5e5e" stroke-width="1.100"/></svg>
<svg class="a" style="left:553px;top:551px" width="10" height="9" viewBox="0 0 10 9"><path d="M1 4.500 L3.800 7.500 L9 1" fill="none" stroke="#5e5e5e" stroke-width="1.100"/></svg>

<!-- ================= TERMINE PANEL ================= -->
<div class="panel m" style="left:845px;top:423px;width:681px;height:311px;background:#fff">
 <div class="ph"></div>
 <div class="pt" style="left:11px">Termine: <span style="letter-spacing:1.3px">10</span></div>
</div>
<style>
.tg{position:absolute;left:850px;width:674px;height:21px;font-size:11px;line-height:21px;color:#1c1c1c}
.tg div{position:absolute;top:0;height:21px;white-space:nowrap;overflow:hidden}
.tg .n{left:5px}
.tg .bg{left:31px;width:643px;background:#fff;border-bottom:1px solid #d9d9d9}
.tg.alt .bg{background:#d6d6d6;border-bottom-color:#cacaca}
.tg .c0{left:31px;width:30px;border-right:1px solid #c9c9c9}
.tg .c1{left:61px;width:154px;border-right:1px solid #c9c9c9;padding-left:4px}
.tg .c2{left:215px;width:153px;border-right:1px solid #c9c9c9;padding-left:4px}
.tg .c3{left:368px;width:153px;border-right:1px solid #c9c9c9;padding-left:4px}
.tg .c4{left:521px;width:153px;padding-left:4px}
.tg .k{left:40px;top:4px;width:13px;height:13px;background:#fff;border:1px solid #a5a5a5}
</style>
<div class="tg" style="top:445px;height:24px;line-height:22px;color:#707070;background:#f0f0f0;border-top:1px solid #a4a4a4;border-bottom:1px solid #a0a0a0"><div class="c0" style="height:23px"></div><div class="c1" style="height:23px">Datum</div><div class="c2" style="height:23px">Therapeut</div><div class="c3" style="height:23px">Positionen</div><div class="c4" style="height:23px">Status</div></div>
<div class="tg" style="top:469px"><div class="bg"></div><div class="n">1</div><div class="c0"></div><div class="k"></div><div class="c1">22.01.2025 00:00:00</div><div class="c2">Labbertasche, Paul (2)</div><div class="c3">20543, 20537, 20545, 20522</div><div class="c4"></div></div>
<div class="tg alt" style="top:490px"><div class="bg"></div><div class="n">2</div><div class="c0"></div><div class="k"></div><div class="c1">29.01.2025 00:00:00</div><div class="c2">Labbertasche, Paul (2)</div><div class="c3">20543, 20537, 20545</div><div class="c4"></div></div>
<div class="tg" style="top:511px"><div class="bg"></div><div class="n">3</div><div class="c0"></div><div class="k"></div><div class="c1">05.02.2025 00:00:00</div><div class="c2">Labbertasche, Paul (2)</div><div class="c3">20543, 20537, 20545</div><div class="c4"></div></div>
<div class="tg alt" style="top:532px"><div class="bg"></div><div class="n">4</div><div class="c0"></div><div class="k"></div><div class="c1">12.02.2025 00:00:00</div><div class="c2">Labbertasche, Paul (2)</div><div class="c3">20543, 20537, 20545</div><div class="c4"></div></div>
<div class="tg" style="top:553px"><div class="bg"></div><div class="n">5</div><div class="c0"></div><div class="k"></div><div class="c1">19.02.2025 00:00:00</div><div class="c2">Labbertasche, Paul (2)</div><div class="c3">20543, 20537, 20545</div><div class="c4"></div></div>
<div class="tg alt" style="top:574px"><div class="bg"></div><div class="n">6</div><div class="c0"></div><div class="k"></div><div class="c1">26.02.2025 00:00:00</div><div class="c2">Labbertasche, Paul (2)</div><div class="c3">20543, 20537, 20545</div><div class="c4"></div></div>
<div class="tg" style="top:595px"><div class="bg"></div><div class="n">7</div><div class="c0"></div><div class="k"></div><div class="c1">01.04.2025 00:00:00</div><div class="c2">Labbertasche, Paul (2)</div><div class="c3">20523</div><div class="c4"></div></div>
<div class="tg alt" style="top:616px"><div class="bg"></div><div class="n">8</div><div class="c0"></div><div class="k"></div><div class="c1">09.04.2025 00:00:00</div><div class="c2">Labbertasche, Paul (2)</div><div class="c3">20543, 20537</div><div class="c4"></div></div>
<div class="tg" style="top:637px"><div class="bg"></div><div class="n">9</div><div class="c0"></div><div class="k"></div><div class="c1">15.04.2025 00:00:00</div><div class="c2">Labbertasche, Paul (2)</div><div class="c3">20543, 20537</div><div class="c4"></div></div>
<div class="tg alt" style="top:658px"><div class="bg"></div><div class="n">10</div><div class="c0"></div><div class="k"></div><div class="c1">22.04.2025 00:00:00</div><div class="c2">Labbertasche, Paul (2)</div><div class="c3">20543, 20537</div><div class="c4"></div></div>
<!-- termine header icons -->
<svg class="a" style="left:1362px;top:425px" width="17" height="17" viewBox="0 0 17 17"><circle cx="8.500" cy="8.500" r="7.600" fill="url(#gPlus)" stroke="#2f63bd" stroke-width=".9"/><path d="M8.500 4.200 V12.800 M4.200 8.500 H12.800" stroke="#2a5fc0" stroke-width="4.200" stroke-linecap="round"/><path d="M8.500 4.600 V12.400 M4.600 8.500 H12.400" stroke="#fff" stroke-width="2.400" stroke-linecap="round"/></svg>
<svg class="a" style="left:1390px;top:424px" width="17" height="17" viewBox="0 0 17 17"><path d="M2 15.500 H15" stroke="#9a9a9a" stroke-width="1.200"/><path d="M3 12.500 L4 9.500 L11.500 2 L14 4.500 L6.500 12Z" fill="#4a7fd6" stroke="#2c57a8" stroke-width=".6"/><path d="M11.500 2 L14 4.500 L12.800 5.700 L10.300 3.200Z" fill="#e04848"/><path d="M3 12.500 L4 9.500 L6.500 12Z" fill="#f3d9a8"/></svg>
<svg class="a" style="left:1419px;top:425px" width="16" height="16" viewBox="0 0 16 16"><circle cx="8" cy="8" r="7.300" fill="#e23030" stroke="#a61616" stroke-width=".8"/><path d="M5 5 L11 11 M11 5 L5 11" stroke="#fff" stroke-width="2.300" stroke-linecap="round"/></svg>
<svg class="a" style="left:1447px;top:425px" width="16" height="16" viewBox="0 0 16 16"><rect x="1.500" y="1.500" width="13" height="13" fill="#fdfdff" stroke="#6d88c4" stroke-width=".9"/><rect x="2" y="2" width="12" height="2.600" fill="#e0413a"/><rect x="4" y="6.500" width="4.500" height="4" fill="#d8342c"/><rect x="5.500" y="7.800" width="1.500" height="1.400" fill="#f7c9c6"/><path d="M10 7.200 H13 M10 9.200 H13 M4 12.300 H13" stroke="#8fa0c8" stroke-width="1.100" stroke-dasharray="1.200 .8"/></svg>
<svg class="a" style="left:1474px;top:427px" width="17" height="12" viewBox="0 0 17 12"><rect x="1" y="1" width="15" height="10" fill="#fbfcff" stroke="#7693cc" stroke-width=".9"/><path d="M1.300 1.300 L8.500 7.200 L15.700 1.300 M1.300 10.700 L6.300 5.600 M15.700 10.700 L10.700 5.600" fill="none" stroke="#8aa4d4" stroke-width=".9"/></svg>
<svg class="a" style="left:1503px;top:425px" width="16" height="17" viewBox="0 0 16 17"><rect x=".5" y=".5" width="15" height="4.600" fill="#ececec" stroke="#bcbcbc" stroke-width=".7"/><rect x=".5" y="5.700" width="15" height="4.600" fill="#ececec" stroke="#bcbcbc" stroke-width=".7"/><rect x=".5" y="10.900" width="15" height="4.600" fill="#ececec" stroke="#bcbcbc" stroke-width=".7"/><path d="M2 2.800 H10 M2 8 H10 M2 13.200 H10" stroke="#9c9c9c" stroke-width="1.500"/></svg>

<!-- ================= BOTTOM LEFT GRID ================= -->
<style>
.lg{position:absolute;left:14px;width:882px;height:21px;font-size:11px;line-height:20px;color:#1c1c1c;background:#fff;border-bottom:1px solid #d4d4d4}
.lg div{position:absolute;top:0;height:20px;white-space:nowrap;overflow:hidden}
.lg .s{left:22px;width:259px;padding-left:3px}
.lg .m{left:281px;width:601px;padding-left:3px;font-size:10.8px;border-left:1px solid #d4d4d4;text-overflow:ellipsis}
.lg .i{left:22px;width:259px;background:#87cefa;padding-left:3px}
.lg .h{left:22px;width:259px;background:#ffd700;padding-left:3px}
.rg{position:absolute;left:911px;width:610px;height:21px;font-size:11px;line-height:20px;color:#1c1c1c}
.rg div{position:absolute;top:0;height:21px;white-space:nowrap;overflow:hidden;border-right:1px solid #d4d4d4;border-bottom:1px solid #d4d4d4;padding-left:4px;background:#fff}
.rg.alt div{background:#d6d6d6;border-color:#c8c8c8}
.rg .d0{left:23px;width:100px}.rg .d1{left:123px;width:60px;text-align:right;padding-right:3px}.rg .d2{left:183px;width:48px}.rg .d3{left:231px;width:29px}.rg .d4{left:260px;width:152px;font-size:10.8px}.rg .d5{left:412px;width:30px}.rg .d6{left:442px;width:148px;font-size:10.9px}.rg .d7{left:590px;width:20px;border-right:none}
.rg.hd{color:#707070;height:23px;line-height:22px}
.rg.hd div{background:#f0f0f0;height:23px;border-bottom:1px solid #a0a0a0;border-right-color:#b4b4b4}
</style>
<div class="a" style="left:11px;top:750px;width:888px;height:222px;border:2px solid #c8a20c;background:#fff"></div>
<div class="lg" style="left:13px;width:884px;top:752px;height:23px;color:#707070;background:#f0f0f0;border-bottom:1px solid #a0a0a0;line-height:22px"><div style="left:22px;width:1px;height:22px;background:#a8a8a8"></div><div class="s" style="left:23px;height:22px;padding-left:4px">Status</div><div class="m" style="left:282px;height:22px;border-left-color:#b4b4b4">Meldung</div></div>
<svg class="a" style="left:880px;top:761px" width="10" height="6" viewBox="0 0 10 6"><path d="M0 5.500 L5 .5 L10 5.500Z" fill="#555"/></svg>
<div class="lg" style="top:775px"><div class="i">Info</div><div class="m">Der ICD-10 Code M13.81 gehört zum Typ Konservativ. [M191]</div></div>
<div class="lg" style="top:796px"><div class="h">Hinweis</div><div class="m">Der Patient hat die DSGVO noch nicht unterschrieben [M120]</div></div>
<div class="lg" style="top:817px"><div class="h">Hinweis</div><div class="m">Die el. Gesundheitskarte wurde zuletzt vor mehr als drei Monaten eingelesen [M27]</div></div>
<div class="lg" style="top:838px"><div class="h">Hinweis</div><div class="m">Die Heilmittelposition 20522 muss auf der Empfangsbestätigung wie folgt dokumentiert sein: Physiotherapeutische Diagno...</div></div>
<div class="lg" style="top:859px"><div class="h">Hinweis</div><div class="m">Die Heilmittelposition 20523 muss auf der Empfangsbestätigung wie folgt dokumentiert sein: Bedarfsdiagnostik. [M189] &nbsp;&lt;I...</div></div>
<div class="lg" style="top:880px"><div class="i">Info</div><div class="m">Die vorliegende Blankoverordnung ist bis zum 14.05.2025 gültig. [M187]</div></div>
<div class="lg" style="top:901px"><div class="i">Info</div><div class="m">Phase grün: Sie haben bislang 18 von 18 primären und 6 von 6 sekundären Heilmitteln vergeben. &nbsp;[M181]</div></div>
<div class="lg" style="top:922px"><div class="h">Hinweis</div><div class="m">Praxisdaten unvollständig: IK Prüfsummenfehler [M4]</div></div>
<div class="lg" style="top:943px"><div class="i">Info</div><div class="m">Verordnung wurde nicht gescannt [M23]</div></div>

<div class="a" style="left:13px;top:775px;width:23px;height:192px;background:#fff"></div>
<svg class="a" style="left:22px;top:781px" width="6" height="9" viewBox="0 0 6 9"><path d="M1 .5 L5 4.500 L1 8.500Z" fill="#555"/></svg>
<!-- ================= BOTTOM RIGHT GRID ================= -->
<div class="a" style="left:909px;top:750px;width:614px;height:222px;border:2px solid #a4a4a4;background:#fff"></div>
<div class="rg hd" style="top:752px"><div class="d0">Verordnungs...</div><div class="d1" style="text-align:left">Beleg-Nr.</div><div class="d2">Veror...</div><div class="d3">Ve...</div><div class="d4">Heilmittel (ext)</div><div class="d5">In...</div><div class="d6">ICD-10-Code</div><div class="d7">...</div></div>
<div class="a" style="left:911px;top:752px;width:23px;height:23px;background:#f0f0f0;border-right:1px solid #a8a8a8;border-bottom:1px solid #a0a0a0"></div>
<svg class="a" style="left:1017px;top:761px" width="10" height="6" viewBox="0 0 10 6"><path d="M0 .5 L5 5.500 L10 .5Z" fill="#555"/></svg>
<div class="rg" style="top:775px"><div class="d0">07.05.2025</div><div class="d1">4349</div><div class="d2">HVO 13</div><div class="d3">En...</div><div class="d4"></div><div class="d5"></div><div class="d6"></div><div class="d7"></div></div>
<div class="rg alt" style="top:796px"><div class="d0">01.04.2025</div><div class="d1">4697</div><div class="d2">HVO 13</div><div class="d3">En...</div><div class="d4">6 x KG</div><div class="d5">WSa</div><div class="d6">M45.0 - Spondylitis ankylos...</div><div class="d7"></div></div>
<div class="rg" style="top:817px"><div class="d0">01.04.2025</div><div class="d1">4281</div><div class="d2">HVO 13</div><div class="d3">Pl...</div><div class="d4">6 x MT</div><div class="d5">WSa</div><div class="d6">M45.0 - Spondylitis ankylos...</div><div class="d7"></div></div>
<div class="rg alt" style="top:838px"><div class="d0" style="background:#daa520">22.01.2025</div><div class="d1">4724</div><div class="d2">HVO 1...</div><div class="d3">Pl...</div><div class="d4">9 x Manuelle Therapie - Blan...</div><div class="d5">EXa</div><div class="d6">M13.81 - Sonstige näher b...</div><div class="d7"></div></div>
<svg class="a" style="left:919px;top:844px" width="6" height="9" viewBox="0 0 6 9"><path d="M1 .5 L5 4.500 L1 8.500Z" fill="#555"/></svg>

<!-- ================= RIGHT VIEWER ================= -->
<div class="a" style="left:1538px;top:202px;width:352px;height:772px;border:1px solid #bcbcbc;background:#f2f2f2"></div>
<div class="a" style="left:1541px;top:205px;width:329px;height:748px;background:#d3d3d3"></div>
<div class="a" style="left:1871px;top:206px;width:15px;height:16px;background:#fefefe;border:1px solid #e6e6e6"></div>
<svg class="a" style="left:1875px;top:211px" width="7" height="4" viewBox="0 0 9 5"><path d="M0 5 L4.500 .5 L9 5Z" fill="#c2c2c2"/></svg>
<div class="a" style="left:1871px;top:936px;width:15px;height:16px;background:#fefefe;border:1px solid #e6e6e6"></div>
<svg class="a" style="left:1875px;top:943px" width="7" height="4" viewBox="0 0 9 5"><path d="M0 0 L4.500 4.500 L9 0Z" fill="#c2c2c2"/></svg>
<div class="a" style="left:1542px;top:954px;width:16px;height:14px;background:#fdfdfd;border:1px solid #e2e2e2"></div>
<svg class="a" style="left:1547px;top:957px" width="5" height="8" viewBox="0 0 5 9"><path d="M5 0 L.5 4.500 L5 9Z" fill="#c2c2c2"/></svg>
<div class="a" style="left:1853px;top:954px;width:16px;height:14px;background:#fdfdfd;border:1px solid #e2e2e2"></div>
<svg class="a" style="left:1859px;top:957px" width="5" height="8" viewBox="0 0 5 9"><path d="M0 0 L4.500 4.500 L0 9Z" fill="#c2c2c2"/></svg>
<!-- Hilfe side tab -->
<div class="a" style="left:1896px;top:202px;width:16px;height:55px;background:#dcdcdc;border:1px solid #bdbdbd"></div>
<div class="t" style="left:1901px;top:227px;font-size:11.3px;color:#222;transform-origin:0 0;transform:rotate(90deg) translate(0,-13px)">Hilfe</div>
<svg class="a" style="left:1901px;top:213px" width="11" height="11" viewBox="0 0 11 11"><circle cx="2" cy="4" r="1.300" fill="none" stroke="#3f6fc0" stroke-width=".9"/><circle cx="8" cy="5.500" r="3.200" fill="none" stroke="#3f6fc0" stroke-width="1"/><path d="M7 4.500 Q8 3.500 9 4.500 Q9 5.500 8 6 V7" fill="none" stroke="#3f6fc0" stroke-width=".8"/></svg>
<!-- ================= SCANNED DOCUMENT ================= -->
<svg class="a" style="left:1548px;top:355px" width="317" height="446" viewBox="0 -1 317 446" font-family="Liberation Sans">
<rect x="-.5" y="-1" width="317" height="446" fill="#fdfdfd"/>
<rect x="313" y="-1" width="3.500" height="446" fill="#f5f5f5"/>
<path d="M0 1.300 H313" stroke="#5a5a5a" stroke-width="1.100"/>
<path d="M0 0 V445" stroke="#e9e9e9" stroke-width="1"/>
<g fill="none" stroke="#3c3c3c" stroke-width=".7">
 <rect x="28" y="17.500" width="164" height="96.200"/>
 <path d="M28 38.500 H192 M28 79.500 H192 M28 97 H192 M142.700 106 V113.700 M152.500 91 V97"/>
 <path d="M22 23.500 V17.400 H28" stroke-width="1.100"/>
 <path d="M294.500 18.800 H299.600 V24" stroke-width="1.300"/>
 <rect x="199.400" y="36.400" width="10.200" height="10.200"/><rect x="199.400" y="49.500" width="10.200" height="10.200"/><rect x="199.400" y="62.400" width="10.200" height="10.200"/><rect x="199.400" y="75.500" width="10.200" height="10.200"/><rect x="199.400" y="88.500" width="10.200" height="10.200"/>
 <path d="M28 137.500 H80 M28 150.400 H80 M59.500 163.500 H80"/>
 <rect x="157.700" y="153.500" width="10.200" height="10.200"/><rect x="178.400" y="153.500" width="10.200" height="10.200"/><rect x="199.400" y="153.500" width="10.200" height="10.200"/><rect x="287.400" y="153.500" width="10.200" height="10.200"/>
 <path d="M27.500 228.500 H297.800 M27.500 241.500 H297.800 M27.500 254.400 H297.800 M250.500 215.800 V254.500 M27.500 276.500 H297.800 M250.500 263 V276.400" stroke-width=".6"/>
 <rect x="27.500" y="283" width="10.100" height="10.100"/><rect x="136.500" y="283" width="10.100" height="10.100"/><rect x="162.600" y="283" width="10.100" height="10.100"/><rect x="27.500" y="299.600" width="10.100" height="10.400"/>
 <path d="M227.500 293.500 H297.800" stroke-width=".6"/>
 <path d="M199.500 413 V341.500 H297.500 V413" stroke-width=".6"/>
 <path d="M28.300 414.500 H193.500" stroke="#9a9a9a" stroke-width=".5"/>
 <path d="M22 414.500 V422.500 H29" stroke-width="1.400"/><path d="M290.500 422.500 H298.500 V415" stroke-width="1.400"/>
 <path d="M199.700 413 H297.800" stroke="#8a8a8a" stroke-width=".4"/>
</g>
<!-- left tiny icons -->
<g fill="#fff" stroke="#777" stroke-width=".6"><rect x="20.500" y="26" width="7.500" height="7.500"/><rect x="20.500" y="38" width="7.500" height="7.500"/><rect x="20.500" y="51" width="7.500" height="7.500"/><rect x="20.500" y="64" width="7.500" height="7.500"/></g>
<path d="M22 28 H26.500 M22 30 H26.500 M23 27 L25.500 32.500 M22 40.500 H26.500 M22 42.500 H26.500 M22 53.500 H26.500 M22 55.500 H26.500 M22 67 H26.500" stroke="#777" stroke-width=".6"/>
<rect x="28.400" y="38.500" width="163" height="40" fill="#fff" opacity=".9"/>
<!-- doc texts -->
<g style="text-rendering:geometricPrecision">
<text x="30.5" y="22.6" font-family="Liberation Sans" font-size="4.36" fill="#444">Krankenkasse bzw. Kostenträger</text>
<text x="29.3" y="42.4" font-family="Liberation Sans" font-size="4.41" fill="#555">Name, Vorname des Versicherten</text>
<text x="30.5" y="83.6" font-family="Liberation Sans" font-size="4.35" fill="#444">Kostenträgerkennung</text>
<text x="87" y="83.6" font-family="Liberation Sans" font-size="4.38" fill="#444">Versicherten-Nr.</text>
<text x="154.7" y="83.6" font-family="Liberation Sans" font-size="4.37" fill="#444">Status</text>
<text x="30.5" y="100.8" font-family="Liberation Sans" font-size="4.37" fill="#444">Betriebsstätten-Nr.</text>
<text x="87" y="100.8" font-family="Liberation Sans" font-size="4.49" fill="#444">Arzt-Nr.</text>
<text x="144.2" y="100.8" font-family="Liberation Sans" font-size="4.35" fill="#444">Datum</text>
<text x="28" y="125.8" font-family="Liberation Sans" font-size="4.61" fill="#444">ICD-10 - Code</text>
<text x="85.2" y="162.9" font-family="Liberation Sans" font-size="5.05" fill="#444">gemäß Heilmittelkatalog</text>
<text x="284.3" y="158" font-family="Liberation Sans" font-size="5.10" fill="#444" text-anchor="end">patientenindividuelle</text>
<text x="284.3" y="163" font-family="Liberation Sans" font-size="5.18" fill="#444" text-anchor="end">Leitsymptomatik</text>
<text x="28" y="171.2" font-family="Liberation Sans" font-size="5.20" fill="#444">Leitsymptomatik</text>
<text x="66.2" y="171.2" font-family="Liberation Sans" font-size="4.35" fill="#333" font-weight="bold" font-style="italic">(patientenindividuelle Leitsymptomatik als Freitext angeben)</text>
<text x="28" y="213.4" font-family="Liberation Sans" font-size="3.48" fill="#444">Heilmittel</text>
<text x="251" y="213.4" font-family="Liberation Sans" font-size="4.50" fill="#444">Behandlungseinheiten</text>
<text x="27.5" y="261" font-family="Liberation Sans" font-size="5.08" fill="#444">Ergänzendes Heilmittel</text>
<text x="41" y="309.6" font-family="Liberation Sans" font-size="5.80" fill="#444">innerhalb von 14 Tagen</text>
<text x="150.4" y="290.3" font-family="Liberation Sans" font-size="5.40" fill="#444">ja</text>
<text x="175.7" y="290.3" font-family="Liberation Sans" font-size="5.55" fill="#444">nein</text>
<text x="205.2" y="411.6" font-family="Liberation Sans" font-size="4.43" fill="#555">Vertragsarztstempel / Unterschrift des Arztes</text>
<text x="28.3" y="419.6" font-family="Liberation Sans" font-size="4.33" fill="#555">Der Barcode enthält keine auf dem Formular nicht lesbaren Daten.</text>
<text x="199.7" y="419.6" font-family="Liberation Sans" font-size="3.88" fill="#555">PRF.NR</text>
<text x="250.2" y="419.6" font-family="Liberation Sans" font-size="4.33" fill="#555">Muster 13.1/E (10.2020)</text>
<text x="212.5" y="44.7" font-family="Liberation Sans" font-size="5.68" fill="#333">Physiotherapie</text>
<text x="212.5" y="57.8" font-family="Liberation Sans" font-size="5.78" fill="#333">Podologische Therapie</text>
<text x="212.5" y="66.7" font-family="Liberation Sans" font-size="5.88" fill="#333">Stimm-, Sprech-, Sprach- und</text>
<text x="212.5" y="72.2" font-family="Liberation Sans" font-size="5.79" fill="#333">Schlucktherapie</text>
<text x="212.5" y="83.8" font-family="Liberation Sans" font-size="5.69" fill="#333">Ergotherapie</text>
<text x="212.5" y="96.9" font-family="Liberation Sans" font-size="5.69" fill="#333">Ernährungstherapie</text>
<text x="199.4" y="26.3" font-family="Liberation Sans" font-size="7.84" fill="#1e1e1e" font-weight="bold">Heilmittelverordnung</text>
<text x="284.6" y="26.3" font-family="Liberation Sans" font-size="7.37" fill="#1e1e1e" font-weight="bold">13</text>
<text x="28" y="120.8" font-family="Liberation Sans" font-size="5.72" fill="#1e1e1e" font-weight="bold">Behandlungsrelevante Diagnose(n)</text>
<text x="28" y="158.2" font-family="Liberation Sans" font-size="5.79" fill="#1e1e1e" font-weight="bold">Diagnose-</text>
<text x="28" y="163" font-family="Liberation Sans" font-size="5.75" fill="#1e1e1e" font-weight="bold">gruppe</text>
<text x="85.2" y="157.9" font-family="Liberation Sans" font-size="5.75" fill="#1e1e1e" font-weight="bold">Leitsymptomatik</text>
<text x="171.8" y="161.8" font-family="Liberation Sans" font-size="4.67" fill="#1e1e1e" font-weight="bold">a</text>
<text x="192.3" y="161.8" font-family="Liberation Sans" font-size="4.58" fill="#1e1e1e" font-weight="bold">b</text>
<text x="212.8" y="161.8" font-family="Liberation Sans" font-size="4.67" fill="#1e1e1e" font-weight="bold">c</text>
<text x="28" y="209.2" font-family="Liberation Sans" font-size="5.86" fill="#1e1e1e" font-weight="bold">Heilmittel nach Maßgabe des Kataloges</text>
<text x="41.8" y="290.5" font-family="Liberation Sans" font-size="5.67" fill="#1e1e1e" font-weight="bold">Therapiebericht</text>
<text x="101.2" y="290.5" font-family="Liberation Sans" font-size="5.60" fill="#1e1e1e" font-weight="bold">Hausbesuch</text>
<text x="199.3" y="287.2" font-family="Liberation Sans" font-size="5.78" fill="#1e1e1e" font-weight="bold">Therapie-</text>
<text x="199.3" y="292.4" font-family="Liberation Sans" font-size="5.66" fill="#1e1e1e" font-weight="bold">frequenz</text>
<text x="41" y="304.8" font-family="Liberation Sans" font-size="5.77" fill="#1e1e1e" font-weight="bold">Dringlicher Behandlungsbedarf</text>
<text x="28.3" y="320" font-family="Liberation Sans" font-size="5.84" fill="#1e1e1e" font-weight="bold">ggf. Therapieziele / weitere med. Befunde und Hinweise</text>
<text x="28.3" y="413" font-family="Liberation Sans" font-size="5.30" fill="#1e1e1e" font-weight="bold">IK des Leistungserbringers</text>
<text x="32" y="33.6" font-family="Liberation Mono" font-size="7.92" fill="#9a9a9a">BARMER</text>
<text x="32.8" y="94.2" font-family="Liberation Mono" font-size="7.96" fill="#9a9a9a">105080008</text>
<text x="145" y="111.9" font-family="Liberation Mono" font-size="7.92" fill="#9a9a9a">22.01.25</text>
<text x="28.8" y="135.2" font-family="Liberation Mono" font-size="8.89" fill="#9a9a9a">M13.81</text>
<text x="61.4" y="161" font-family="Liberation Mono" font-size="8.75" fill="#9a9a9a">EX</text>
<text x="88.3" y="134.8" font-family="Liberation Mono" font-size="5.96" fill="#a0a0a0">Sonstige näher bezeichnete Arthritis der Schulterregion [Kla</text>
<text x="88.3" y="147.4" font-family="Liberation Mono" font-size="5.96" fill="#a0a0a0">vikula, Skapula, Akromioklavikular-, Schulter-, Sternoklavik</text>
<text x="29.2" y="179.7" font-family="Liberation Mono" font-size="5.96" fill="#a0a0a0">Schädigung/Störung der Gelenkfunktion (einschließlich des zugehörigen</text>
<text x="29.2" y="192.3" font-family="Liberation Mono" font-size="5.96" fill="#a0a0a0">Kapsel-Band-Apparats und der umgreifenden Muskulatur|; Schädigung/Störung d</text>
<text x="28.3" y="225.2" font-family="Liberation Mono" font-size="6.04" fill="#ababab">BLANKOVERORDNUNG</text>
<text x="202" y="45" font-family="Liberation Mono" font-size="8.00" fill="#666">X</text>
<text x="160.3" y="162" font-family="Liberation Mono" font-size="8.00" fill="#666">X</text>
<text x="181" y="162" font-family="Liberation Mono" font-size="8.00" fill="#666">X</text>
<text x="165.3" y="291.3" font-family="Liberation Mono" font-size="7.67" fill="#666">X</text>
</g>
<!-- barcode -->
<g>
<rect x="197.400" y="310" width="100.800" height="18.300" fill="#fafafa"/>
<rect x="197.400" y="310" width="3.700" height="18.300" fill="#111"/><path d="M202 310 V328.300 M203.300 310 V328.300 M204.600 310 V328.300" stroke="#777" stroke-width=".7"/>
<rect x="289" y="310" width="3.600" height="18.300" fill="#111"/><path d="M294 310 V328.300 M295.400 310 V328.300 M296.800 310 V328.300 M298 310 V328.300" stroke="#888" stroke-width=".7"/>
<path d="M211.7 310.3h0.9v1.1h-0.9zM214.6 310.3h0.9v1.1h-0.9zM215.5 310.3h0.9v1.1h-0.9zM217.4 310.3h0.9v1.1h-0.9zM221.2 310.3h1.9v1.1h-1.9zM223.1 310.3h3.8v1.1h-3.8zM233.6 310.3h0.9v1.1h-0.9zM237.3 310.3h3.8v1.1h-3.8zM241.2 310.3h0.9v1.1h-0.9zM242.1 310.3h0.9v1.1h-0.9zM244.0 310.3h1.9v1.1h-1.9zM247.8 310.3h1.9v1.1h-1.9zM250.7 310.3h1.9v1.1h-1.9zM254.4 310.3h3.8v1.1h-3.8zM258.2 310.3h0.9v1.1h-0.9zM260.1 310.3h0.9v1.1h-0.9zM261.1 310.3h0.9v1.1h-0.9zM262.1 310.3h0.9v1.1h-0.9zM263.0 310.3h1.9v1.1h-1.9zM265.9 310.3h0.9v1.1h-0.9zM266.8 310.3h0.9v1.1h-0.9zM269.6 310.3h0.9v1.1h-0.9zM270.6 310.3h1.9v1.1h-1.9zM272.5 310.3h3.8v1.1h-3.8zM276.3 310.3h0.9v1.1h-0.9zM277.2 310.3h0.9v1.1h-0.9zM282.0 310.3h1.9v1.1h-1.9zM284.9 310.3h1.9v1.1h-1.9zM206.0 311.4h0.9v1.1h-0.9zM208.8 311.4h2.8v1.1h-2.8zM211.7 311.4h0.9v1.1h-0.9zM212.7 311.4h0.9v1.1h-0.9zM214.6 311.4h1.9v1.1h-1.9zM216.4 311.4h1.9v1.1h-1.9zM220.2 311.4h0.9v1.1h-0.9zM221.2 311.4h2.8v1.1h-2.8zM224.1 311.4h1.9v1.1h-1.9zM226.9 311.4h0.9v1.1h-0.9zM232.6 311.4h2.8v1.1h-2.8zM237.3 311.4h0.9v1.1h-0.9zM240.2 311.4h0.9v1.1h-0.9zM241.2 311.4h0.9v1.1h-0.9zM247.8 311.4h0.9v1.1h-0.9zM250.7 311.4h0.9v1.1h-0.9zM254.4 311.4h0.9v1.1h-0.9zM256.4 311.4h0.9v1.1h-0.9zM260.1 311.4h0.9v1.1h-0.9zM263.9 311.4h0.9v1.1h-0.9zM264.9 311.4h0.9v1.1h-0.9zM266.8 311.4h0.9v1.1h-0.9zM270.6 311.4h1.9v1.1h-1.9zM273.4 311.4h1.9v1.1h-1.9zM278.2 311.4h0.9v1.1h-0.9zM279.1 311.4h0.9v1.1h-0.9zM282.9 311.4h0.9v1.1h-0.9zM283.9 311.4h1.9v1.1h-1.9zM207.9 312.5h1.9v1.1h-1.9zM209.8 312.5h1.9v1.1h-1.9zM213.6 312.5h0.9v1.1h-0.9zM216.4 312.5h1.9v1.1h-1.9zM218.3 312.5h0.9v1.1h-0.9zM220.2 312.5h0.9v1.1h-0.9zM221.2 312.5h1.9v1.1h-1.9zM223.1 312.5h0.9v1.1h-0.9zM224.1 312.5h2.8v1.1h-2.8zM232.6 312.5h0.9v1.1h-0.9zM233.6 312.5h1.9v1.1h-1.9zM236.4 312.5h1.9v1.1h-1.9zM242.1 312.5h0.9v1.1h-0.9zM244.0 312.5h0.9v1.1h-0.9zM245.9 312.5h0.9v1.1h-0.9zM248.8 312.5h0.9v1.1h-0.9zM254.4 312.5h0.9v1.1h-0.9zM258.2 312.5h0.9v1.1h-0.9zM263.0 312.5h0.9v1.1h-0.9zM264.9 312.5h1.9v1.1h-1.9zM269.6 312.5h0.9v1.1h-0.9zM270.6 312.5h0.9v1.1h-0.9zM271.6 312.5h0.9v1.1h-0.9zM273.4 312.5h1.9v1.1h-1.9zM281.1 312.5h1.9v1.1h-1.9zM282.9 312.5h0.9v1.1h-0.9zM206.0 313.6h0.9v1.1h-0.9zM208.8 313.6h0.9v1.1h-0.9zM212.7 313.6h0.9v1.1h-0.9zM215.5 313.6h0.9v1.1h-0.9zM217.4 313.6h0.9v1.1h-0.9zM221.2 313.6h0.9v1.1h-0.9zM222.2 313.6h0.9v1.1h-0.9zM224.1 313.6h0.9v1.1h-0.9zM225.0 313.6h0.9v1.1h-0.9zM228.8 313.6h1.9v1.1h-1.9zM231.7 313.6h0.9v1.1h-0.9zM232.6 313.6h2.8v1.1h-2.8zM235.4 313.6h0.9v1.1h-0.9zM237.3 313.6h0.9v1.1h-0.9zM238.3 313.6h0.9v1.1h-0.9zM239.2 313.6h1.9v1.1h-1.9zM241.2 313.6h0.9v1.1h-0.9zM242.1 313.6h0.9v1.1h-0.9zM243.1 313.6h1.9v1.1h-1.9zM249.7 313.6h0.9v1.1h-0.9zM252.6 313.6h0.9v1.1h-0.9zM254.4 313.6h0.9v1.1h-0.9zM256.4 313.6h1.9v1.1h-1.9zM258.2 313.6h1.9v1.1h-1.9zM260.1 313.6h0.9v1.1h-0.9zM261.1 313.6h0.9v1.1h-0.9zM263.0 313.6h1.9v1.1h-1.9zM266.8 313.6h0.9v1.1h-0.9zM270.6 313.6h3.8v1.1h-3.8zM276.3 313.6h2.8v1.1h-2.8zM281.1 313.6h1.9v1.1h-1.9zM284.9 313.6h0.9v1.1h-0.9zM286.8 313.6h0.9v1.1h-0.9zM206.9 314.7h0.9v1.1h-0.9zM208.8 314.7h0.9v1.1h-0.9zM210.8 314.7h2.8v1.1h-2.8zM213.6 314.7h0.9v1.1h-0.9zM218.3 314.7h0.9v1.1h-0.9zM222.2 314.7h0.9v1.1h-0.9zM225.9 314.7h0.9v1.1h-0.9zM230.7 314.7h0.9v1.1h-0.9zM231.7 314.7h0.9v1.1h-0.9zM233.6 314.7h0.9v1.1h-0.9zM236.4 314.7h0.9v1.1h-0.9zM238.3 314.7h0.9v1.1h-0.9zM241.2 314.7h0.9v1.1h-0.9zM245.9 314.7h0.9v1.1h-0.9zM247.8 314.7h0.9v1.1h-0.9zM248.8 314.7h1.9v1.1h-1.9zM250.7 314.7h1.9v1.1h-1.9zM259.2 314.7h0.9v1.1h-0.9zM261.1 314.7h0.9v1.1h-0.9zM262.1 314.7h0.9v1.1h-0.9zM263.0 314.7h0.9v1.1h-0.9zM264.9 314.7h0.9v1.1h-0.9zM265.9 314.7h0.9v1.1h-0.9zM267.8 314.7h1.9v1.1h-1.9zM270.6 314.7h0.9v1.1h-0.9zM271.6 314.7h4.8v1.1h-4.8zM276.3 314.7h0.9v1.1h-0.9zM278.2 314.7h0.9v1.1h-0.9zM280.1 314.7h0.9v1.1h-0.9zM281.1 314.7h0.9v1.1h-0.9zM282.9 314.7h0.9v1.1h-0.9zM207.9 315.8h0.9v1.1h-0.9zM209.8 315.8h1.9v1.1h-1.9zM211.7 315.8h0.9v1.1h-0.9zM214.6 315.8h0.9v1.1h-0.9zM215.5 315.8h0.9v1.1h-0.9zM220.2 315.8h1.9v1.1h-1.9zM224.1 315.8h1.9v1.1h-1.9zM229.8 315.8h1.9v1.1h-1.9zM233.6 315.8h2.8v1.1h-2.8zM237.3 315.8h0.9v1.1h-0.9zM238.3 315.8h1.9v1.1h-1.9zM242.1 315.8h0.9v1.1h-0.9zM243.1 315.8h0.9v1.1h-0.9zM245.9 315.8h1.9v1.1h-1.9zM249.7 315.8h0.9v1.1h-0.9zM250.7 315.8h0.9v1.1h-0.9zM251.6 315.8h0.9v1.1h-0.9zM253.5 315.8h0.9v1.1h-0.9zM256.4 315.8h0.9v1.1h-0.9zM257.3 315.8h0.9v1.1h-0.9zM258.2 315.8h1.9v1.1h-1.9zM262.1 315.8h0.9v1.1h-0.9zM263.0 315.8h1.9v1.1h-1.9zM264.9 315.8h0.9v1.1h-0.9zM267.8 315.8h1.9v1.1h-1.9zM270.6 315.8h1.9v1.1h-1.9zM276.3 315.8h0.9v1.1h-0.9zM277.2 315.8h0.9v1.1h-0.9zM278.2 315.8h0.9v1.1h-0.9zM280.1 315.8h0.9v1.1h-0.9zM281.1 315.8h0.9v1.1h-0.9zM282.0 315.8h0.9v1.1h-0.9zM282.9 315.8h0.9v1.1h-0.9zM206.0 316.9h0.9v1.1h-0.9zM207.9 316.9h1.9v1.1h-1.9zM214.6 316.9h0.9v1.1h-0.9zM216.4 316.9h1.9v1.1h-1.9zM219.3 316.9h0.9v1.1h-0.9zM220.2 316.9h0.9v1.1h-0.9zM222.2 316.9h1.9v1.1h-1.9zM225.9 316.9h0.9v1.1h-0.9zM233.6 316.9h0.9v1.1h-0.9zM244.0 316.9h0.9v1.1h-0.9zM244.9 316.9h0.9v1.1h-0.9zM246.8 316.9h2.8v1.1h-2.8zM249.7 316.9h0.9v1.1h-0.9zM250.7 316.9h0.9v1.1h-0.9zM251.6 316.9h0.9v1.1h-0.9zM253.5 316.9h1.9v1.1h-1.9zM257.3 316.9h4.8v1.1h-4.8zM263.0 316.9h3.8v1.1h-3.8zM266.8 316.9h0.9v1.1h-0.9zM269.6 316.9h0.9v1.1h-0.9zM271.6 316.9h0.9v1.1h-0.9zM274.4 316.9h1.9v1.1h-1.9zM277.2 316.9h0.9v1.1h-0.9zM279.1 316.9h0.9v1.1h-0.9zM281.1 316.9h1.9v1.1h-1.9zM282.9 316.9h0.9v1.1h-0.9zM285.8 316.9h1.9v1.1h-1.9zM206.0 318.0h1.9v1.1h-1.9zM210.8 318.0h0.9v1.1h-0.9zM211.7 318.0h0.9v1.1h-0.9zM212.7 318.0h0.9v1.1h-0.9zM215.5 318.0h1.9v1.1h-1.9zM217.4 318.0h0.9v1.1h-0.9zM222.2 318.0h0.9v1.1h-0.9zM223.1 318.0h0.9v1.1h-0.9zM224.1 318.0h0.9v1.1h-0.9zM225.0 318.0h0.9v1.1h-0.9zM226.9 318.0h0.9v1.1h-0.9zM227.8 318.0h0.9v1.1h-0.9zM228.8 318.0h0.9v1.1h-0.9zM231.7 318.0h0.9v1.1h-0.9zM232.6 318.0h0.9v1.1h-0.9zM237.3 318.0h0.9v1.1h-0.9zM239.2 318.0h0.9v1.1h-0.9zM241.2 318.0h0.9v1.1h-0.9zM243.1 318.0h0.9v1.1h-0.9zM244.0 318.0h0.9v1.1h-0.9zM245.9 318.0h0.9v1.1h-0.9zM246.8 318.0h0.9v1.1h-0.9zM247.8 318.0h1.9v1.1h-1.9zM249.7 318.0h0.9v1.1h-0.9zM252.6 318.0h0.9v1.1h-0.9zM253.5 318.0h2.8v1.1h-2.8zM257.3 318.0h0.9v1.1h-0.9zM260.1 318.0h3.8v1.1h-3.8zM263.9 318.0h0.9v1.1h-0.9zM264.9 318.0h0.9v1.1h-0.9zM268.7 318.0h0.9v1.1h-0.9zM269.6 318.0h1.9v1.1h-1.9zM276.3 318.0h0.9v1.1h-0.9zM277.2 318.0h0.9v1.1h-0.9zM278.2 318.0h0.9v1.1h-0.9zM282.9 318.0h0.9v1.1h-0.9zM285.8 318.0h0.9v1.1h-0.9zM286.8 318.0h0.9v1.1h-0.9zM210.8 319.1h0.9v1.1h-0.9zM212.7 319.1h2.8v1.1h-2.8zM216.4 319.1h0.9v1.1h-0.9zM217.4 319.1h0.9v1.1h-0.9zM218.3 319.1h0.9v1.1h-0.9zM219.3 319.1h0.9v1.1h-0.9zM223.1 319.1h0.9v1.1h-0.9zM226.9 319.1h0.9v1.1h-0.9zM227.8 319.1h0.9v1.1h-0.9zM228.8 319.1h0.9v1.1h-0.9zM230.7 319.1h0.9v1.1h-0.9zM231.7 319.1h2.8v1.1h-2.8zM236.4 319.1h0.9v1.1h-0.9zM238.3 319.1h0.9v1.1h-0.9zM240.2 319.1h1.9v1.1h-1.9zM242.1 319.1h0.9v1.1h-0.9zM244.0 319.1h0.9v1.1h-0.9zM244.9 319.1h0.9v1.1h-0.9zM245.9 319.1h0.9v1.1h-0.9zM246.8 319.1h0.9v1.1h-0.9zM247.8 319.1h0.9v1.1h-0.9zM250.7 319.1h0.9v1.1h-0.9zM258.2 319.1h0.9v1.1h-0.9zM263.0 319.1h0.9v1.1h-0.9zM263.9 319.1h1.9v1.1h-1.9zM269.6 319.1h0.9v1.1h-0.9zM270.6 319.1h1.9v1.1h-1.9zM273.4 319.1h1.9v1.1h-1.9zM276.3 319.1h0.9v1.1h-0.9zM277.2 319.1h2.8v1.1h-2.8zM282.9 319.1h0.9v1.1h-0.9zM283.9 319.1h0.9v1.1h-0.9zM286.8 319.1h0.9v1.1h-0.9zM206.9 320.2h0.9v1.1h-0.9zM208.8 320.2h2.8v1.1h-2.8zM211.7 320.2h0.9v1.1h-0.9zM213.6 320.2h0.9v1.1h-0.9zM215.5 320.2h1.9v1.1h-1.9zM217.4 320.2h0.9v1.1h-0.9zM221.2 320.2h1.9v1.1h-1.9zM224.1 320.2h0.9v1.1h-0.9zM225.0 320.2h0.9v1.1h-0.9zM225.9 320.2h0.9v1.1h-0.9zM227.8 320.2h0.9v1.1h-0.9zM228.8 320.2h0.9v1.1h-0.9zM229.8 320.2h1.9v1.1h-1.9zM231.7 320.2h0.9v1.1h-0.9zM234.5 320.2h0.9v1.1h-0.9zM237.3 320.2h1.9v1.1h-1.9zM240.2 320.2h2.8v1.1h-2.8zM244.0 320.2h0.9v1.1h-0.9zM246.8 320.2h0.9v1.1h-0.9zM249.7 320.2h0.9v1.1h-0.9zM250.7 320.2h0.9v1.1h-0.9zM254.4 320.2h0.9v1.1h-0.9zM255.4 320.2h1.9v1.1h-1.9zM257.3 320.2h1.9v1.1h-1.9zM259.2 320.2h1.9v1.1h-1.9zM261.1 320.2h0.9v1.1h-0.9zM263.0 320.2h0.9v1.1h-0.9zM264.9 320.2h0.9v1.1h-0.9zM266.8 320.2h0.9v1.1h-0.9zM268.7 320.2h0.9v1.1h-0.9zM276.3 320.2h0.9v1.1h-0.9zM277.2 320.2h0.9v1.1h-0.9zM278.2 320.2h0.9v1.1h-0.9zM282.0 320.2h0.9v1.1h-0.9zM282.9 320.2h0.9v1.1h-0.9zM284.9 320.2h0.9v1.1h-0.9zM206.9 321.3h2.8v1.1h-2.8zM209.8 321.3h0.9v1.1h-0.9zM210.8 321.3h0.9v1.1h-0.9zM211.7 321.3h0.9v1.1h-0.9zM215.5 321.3h1.9v1.1h-1.9zM217.4 321.3h0.9v1.1h-0.9zM220.2 321.3h0.9v1.1h-0.9zM221.2 321.3h0.9v1.1h-0.9zM222.2 321.3h2.8v1.1h-2.8zM226.9 321.3h0.9v1.1h-0.9zM227.8 321.3h1.9v1.1h-1.9zM229.8 321.3h0.9v1.1h-0.9zM232.6 321.3h0.9v1.1h-0.9zM234.5 321.3h1.9v1.1h-1.9zM236.4 321.3h0.9v1.1h-0.9zM237.3 321.3h0.9v1.1h-0.9zM238.3 321.3h1.9v1.1h-1.9zM242.1 321.3h1.9v1.1h-1.9zM244.0 321.3h0.9v1.1h-0.9zM245.9 321.3h0.9v1.1h-0.9zM248.8 321.3h0.9v1.1h-0.9zM250.7 321.3h0.9v1.1h-0.9zM256.4 321.3h0.9v1.1h-0.9zM257.3 321.3h0.9v1.1h-0.9zM258.2 321.3h0.9v1.1h-0.9zM259.2 321.3h0.9v1.1h-0.9zM260.1 321.3h2.8v1.1h-2.8zM263.0 321.3h0.9v1.1h-0.9zM266.8 321.3h0.9v1.1h-0.9zM267.8 321.3h0.9v1.1h-0.9zM268.7 321.3h4.8v1.1h-4.8zM275.4 321.3h0.9v1.1h-0.9zM276.3 321.3h0.9v1.1h-0.9zM277.2 321.3h0.9v1.1h-0.9zM280.1 321.3h0.9v1.1h-0.9zM281.1 321.3h1.9v1.1h-1.9zM282.9 321.3h0.9v1.1h-0.9zM284.9 321.3h0.9v1.1h-0.9zM285.8 321.3h1.9v1.1h-1.9zM206.0 322.4h0.9v1.1h-0.9zM206.9 322.4h0.9v1.1h-0.9zM207.9 322.4h0.9v1.1h-0.9zM208.8 322.4h0.9v1.1h-0.9zM209.8 322.4h0.9v1.1h-0.9zM211.7 322.4h2.8v1.1h-2.8zM214.6 322.4h0.9v1.1h-0.9zM216.4 322.4h1.9v1.1h-1.9zM218.3 322.4h2.8v1.1h-2.8zM224.1 322.4h0.9v1.1h-0.9zM225.9 322.4h0.9v1.1h-0.9zM229.8 322.4h0.9v1.1h-0.9zM230.7 322.4h0.9v1.1h-0.9zM231.7 322.4h1.9v1.1h-1.9zM233.6 322.4h0.9v1.1h-0.9zM234.5 322.4h1.9v1.1h-1.9zM237.3 322.4h0.9v1.1h-0.9zM238.3 322.4h1.9v1.1h-1.9zM240.2 322.4h1.9v1.1h-1.9zM244.9 322.4h0.9v1.1h-0.9zM245.9 322.4h1.9v1.1h-1.9zM247.8 322.4h0.9v1.1h-0.9zM250.7 322.4h2.8v1.1h-2.8zM255.4 322.4h0.9v1.1h-0.9zM256.4 322.4h0.9v1.1h-0.9zM259.2 322.4h0.9v1.1h-0.9zM263.9 322.4h0.9v1.1h-0.9zM264.9 322.4h0.9v1.1h-0.9zM266.8 322.4h0.9v1.1h-0.9zM267.8 322.4h1.9v1.1h-1.9zM269.6 322.4h0.9v1.1h-0.9zM271.6 322.4h2.8v1.1h-2.8zM274.4 322.4h1.9v1.1h-1.9zM276.3 322.4h1.9v1.1h-1.9zM283.9 322.4h0.9v1.1h-0.9zM285.8 322.4h0.9v1.1h-0.9zM208.8 323.5h0.9v1.1h-0.9zM211.7 323.5h1.9v1.1h-1.9zM214.6 323.5h1.9v1.1h-1.9zM216.4 323.5h0.9v1.1h-0.9zM217.4 323.5h3.8v1.1h-3.8zM221.2 323.5h0.9v1.1h-0.9zM224.1 323.5h0.9v1.1h-0.9zM225.9 323.5h1.9v1.1h-1.9zM228.8 323.5h0.9v1.1h-0.9zM229.8 323.5h0.9v1.1h-0.9zM230.7 323.5h0.9v1.1h-0.9zM235.4 323.5h0.9v1.1h-0.9zM239.2 323.5h0.9v1.1h-0.9zM241.2 323.5h2.8v1.1h-2.8zM245.9 323.5h0.9v1.1h-0.9zM246.8 323.5h0.9v1.1h-0.9zM247.8 323.5h0.9v1.1h-0.9zM249.7 323.5h0.9v1.1h-0.9zM250.7 323.5h2.8v1.1h-2.8zM254.4 323.5h0.9v1.1h-0.9zM255.4 323.5h0.9v1.1h-0.9zM257.3 323.5h0.9v1.1h-0.9zM260.1 323.5h0.9v1.1h-0.9zM263.9 323.5h0.9v1.1h-0.9zM266.8 323.5h2.8v1.1h-2.8zM269.6 323.5h0.9v1.1h-0.9zM270.6 323.5h0.9v1.1h-0.9zM271.6 323.5h0.9v1.1h-0.9zM272.5 323.5h0.9v1.1h-0.9zM273.4 323.5h1.9v1.1h-1.9zM275.4 323.5h3.8v1.1h-3.8zM279.1 323.5h2.8v1.1h-2.8zM282.9 323.5h0.9v1.1h-0.9zM284.9 323.5h0.9v1.1h-0.9zM285.8 323.5h1.9v1.1h-1.9zM208.8 324.6h0.9v1.1h-0.9zM214.6 324.6h4.8v1.1h-4.8zM220.2 324.6h0.9v1.1h-0.9zM221.2 324.6h1.9v1.1h-1.9zM223.1 324.6h0.9v1.1h-0.9zM226.9 324.6h0.9v1.1h-0.9zM230.7 324.6h0.9v1.1h-0.9zM231.7 324.6h0.9v1.1h-0.9zM232.6 324.6h0.9v1.1h-0.9zM233.6 324.6h0.9v1.1h-0.9zM234.5 324.6h0.9v1.1h-0.9zM235.4 324.6h0.9v1.1h-0.9zM237.3 324.6h0.9v1.1h-0.9zM238.3 324.6h1.9v1.1h-1.9zM240.2 324.6h1.9v1.1h-1.9zM243.1 324.6h0.9v1.1h-0.9zM245.9 324.6h2.8v1.1h-2.8zM248.8 324.6h1.9v1.1h-1.9zM250.7 324.6h0.9v1.1h-0.9zM253.5 324.6h0.9v1.1h-0.9zM254.4 324.6h0.9v1.1h-0.9zM255.4 324.6h0.9v1.1h-0.9zM256.4 324.6h0.9v1.1h-0.9zM257.3 324.6h0.9v1.1h-0.9zM259.2 324.6h1.9v1.1h-1.9zM262.1 324.6h1.9v1.1h-1.9zM264.9 324.6h0.9v1.1h-0.9zM265.9 324.6h0.9v1.1h-0.9zM266.8 324.6h0.9v1.1h-0.9zM272.5 324.6h0.9v1.1h-0.9zM276.3 324.6h0.9v1.1h-0.9zM277.2 324.6h0.9v1.1h-0.9zM280.1 324.6h0.9v1.1h-0.9zM284.9 324.6h0.9v1.1h-0.9zM206.0 325.7h0.9v1.1h-0.9zM207.9 325.7h0.9v1.1h-0.9zM208.8 325.7h0.9v1.1h-0.9zM210.8 325.7h0.9v1.1h-0.9zM217.4 325.7h0.9v1.1h-0.9zM219.3 325.7h0.9v1.1h-0.9zM223.1 325.7h1.9v1.1h-1.9zM225.0 325.7h0.9v1.1h-0.9zM227.8 325.7h0.9v1.1h-0.9zM233.6 325.7h0.9v1.1h-0.9zM234.5 325.7h1.9v1.1h-1.9zM238.3 325.7h1.9v1.1h-1.9zM243.1 325.7h0.9v1.1h-0.9zM244.0 325.7h0.9v1.1h-0.9zM246.8 325.7h0.9v1.1h-0.9zM247.8 325.7h1.9v1.1h-1.9zM249.7 325.7h0.9v1.1h-0.9zM250.7 325.7h0.9v1.1h-0.9zM252.6 325.7h1.9v1.1h-1.9zM255.4 325.7h1.9v1.1h-1.9zM258.2 325.7h1.9v1.1h-1.9zM262.1 325.7h0.9v1.1h-0.9zM263.0 325.7h1.9v1.1h-1.9zM264.9 325.7h0.9v1.1h-0.9zM265.9 325.7h0.9v1.1h-0.9zM268.7 325.7h0.9v1.1h-0.9zM269.6 325.7h0.9v1.1h-0.9zM270.6 325.7h0.9v1.1h-0.9zM271.6 325.7h0.9v1.1h-0.9zM275.4 325.7h0.9v1.1h-0.9zM278.2 325.7h0.9v1.1h-0.9zM279.1 325.7h0.9v1.1h-0.9zM281.1 325.7h0.9v1.1h-0.9zM282.9 325.7h0.9v1.1h-0.9zM283.9 325.7h0.9v1.1h-0.9zM284.9 325.7h0.9v1.1h-0.9zM285.8 325.7h0.9v1.1h-0.9zM207.9 326.8h0.9v1.1h-0.9zM208.8 326.8h0.9v1.1h-0.9zM209.8 326.8h0.9v1.1h-0.9zM211.7 326.8h0.9v1.1h-0.9zM213.6 326.8h0.9v1.1h-0.9zM215.5 326.8h0.9v1.1h-0.9zM216.4 326.8h0.9v1.1h-0.9zM221.2 326.8h0.9v1.1h-0.9zM225.0 326.8h0.9v1.1h-0.9zM225.9 326.8h0.9v1.1h-0.9zM226.9 326.8h0.9v1.1h-0.9zM227.8 326.8h0.9v1.1h-0.9zM228.8 326.8h0.9v1.1h-0.9zM230.7 326.8h1.9v1.1h-1.9zM234.5 326.8h0.9v1.1h-0.9zM237.3 326.8h0.9v1.1h-0.9zM238.3 326.8h0.9v1.1h-0.9zM241.2 326.8h0.9v1.1h-0.9zM244.0 326.8h0.9v1.1h-0.9zM244.9 326.8h0.9v1.1h-0.9zM245.9 326.8h0.9v1.1h-0.9zM246.8 326.8h1.9v1.1h-1.9zM248.8 326.8h0.9v1.1h-0.9zM249.7 326.8h0.9v1.1h-0.9zM250.7 326.8h1.9v1.1h-1.9zM255.4 326.8h0.9v1.1h-0.9zM256.4 326.8h0.9v1.1h-0.9zM258.2 326.8h0.9v1.1h-0.9zM261.1 326.8h2.8v1.1h-2.8zM265.9 326.8h0.9v1.1h-0.9zM266.8 326.8h1.9v1.1h-1.9zM271.6 326.8h0.9v1.1h-0.9zM272.5 326.8h2.8v1.1h-2.8zM275.4 326.8h0.9v1.1h-0.9zM282.0 326.8h1.9v1.1h-1.9zM283.9 326.8h0.9v1.1h-0.9zM284.9 326.8h0.9v1.1h-0.9zM285.8 326.8h0.9v1.1h-0.9z" fill="#1a1a1a"/>
</g>
<path d="M274 342.500 L278 339.500 H291 V342.500Z" fill="#fdfdfd"/>
<path d="M2 432 H17 M5 420 V444" stroke="#f1f1f1" stroke-width=".8"/>
</svg>


<!--SECTIONS-->
<!-- ================= DIALOG ================= -->
<div class="a" style="left:765px;top:442px;width:389px;height:147px;border-radius:8px;background:#f0f0f0;border:1px solid #b9b9b9;box-shadow:0 26px 42px rgba(0,0,0,.19),0 4px 10px rgba(0,0,0,.07)"></div>
<div class="t" style="left:774px;top:451px;font-size:10.6px;color:#1c1c1c">SmartVO</div>
<svg class="a" style="left:1124px;top:452px" width="12" height="12" viewBox="0 0 12 12"><path d="M1 1 L11 11 M11 1 L1 11" stroke="#8a8a8a" stroke-width="1"/></svg>
<svg class="a" style="left:797px;top:492px" width="34" height="34" viewBox="0 0 34 34"><circle cx="17" cy="17" r="16" fill="#e8e8e8" stroke="#8d8d8d" stroke-width=".8"/><circle cx="17" cy="17" r="14.200" fill="url(#gQ)" stroke="#132a6e" stroke-width=".8"/><ellipse cx="15" cy="10" rx="10" ry="6" fill="#fff" opacity=".16"/><text x="17" y="25.500" font-size="24" font-weight="bold" text-anchor="middle" fill="#fff" font-family="Liberation Sans">?</text></svg>
<div class="t" style="left:839px;top:502px;font-size:10.9px;color:#1c1c1c">Die Verordnung enthält Warnungen. Trotzdem abrechnen?</div>
<div class="a" style="left:881px;top:553px;width:75px;height:23px;background:#fff;border:1px solid #8f8f8f;font-size:11.5px;line-height:22px;text-align:center;color:#1c1c1c">Ja</div>
<div class="a" style="left:962px;top:553px;width:75px;height:23px;background:#fff;border:1px solid #2a4f9a;font-size:11.5px;line-height:22px;text-align:center;color:#1c1c1c;box-shadow:inset 0 0 0 1px #2a4f9a"></div>
<div class="a" style="left:964px;top:555px;width:71px;height:19px;border:1px dotted #222;font-size:11.5px;line-height:18px;text-align:center;color:#1c1c1c">Nein</div>


</body></html>
